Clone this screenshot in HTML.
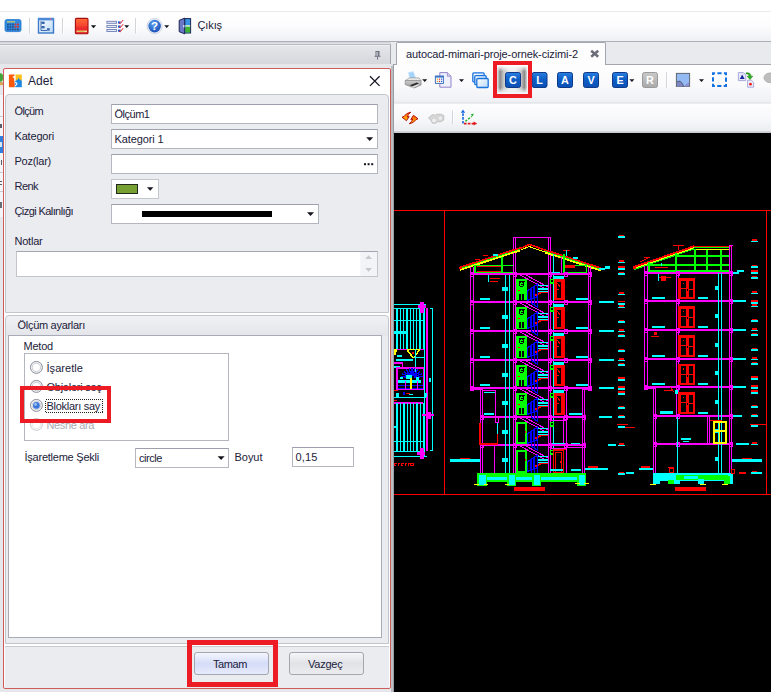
<!DOCTYPE html>
<html lang="tr">
<head>
<meta charset="utf-8">
<title>Adet</title>
<style>
html,body{margin:0;padding:0;}
body{width:771px;height:692px;overflow:hidden;background:#fff;position:relative;font-family:"Liberation Sans","DejaVu Sans",sans-serif;font-size:11px;color:#1b1b3a;}
.abs{position:absolute;}
.t{position:absolute;white-space:nowrap;line-height:13px;height:13px;}
#maintb{left:0;top:11px;width:771px;height:30px;background:linear-gradient(#ffffff 0%,#fdfdfe 45%,#eef0f4 100%);border-top:1px solid #e9eaee;box-sizing:border-box;}
#tbline1{left:0;top:41px;width:771px;height:1px;background:#adb0b8;}
#tbline2{left:0;top:42px;width:771px;height:1px;background:#d4d6dc;}
#workbg{left:0;top:43px;width:771px;height:649px;background:#dfe0e5;}
#lphead{left:0;top:44px;width:391px;height:21px;background:linear-gradient(#e6e7eb,#d6d7dc);border-top:1px solid #b9bbc3;border-right:1px solid #a3a5af;border-bottom:1px solid #c4c6cd;box-sizing:border-box;box-shadow:inset 0 1px 0 #eff0f3;}
#lpbody{left:0;top:64px;width:391px;height:628px;background:#e6e7eb;}
#dlg{left:3px;top:68px;width:388px;height:621px;box-sizing:border-box;border:1px solid #cd5c5a;border-radius:2px;background:#fff;}
#p1{left:5px;top:94px;width:384px;height:219px;box-sizing:border-box;border:1px solid #c3c5cc;border-radius:4px 4px 0 0;background:#ebecf0;}
#p2{left:5px;top:315px;width:384px;height:329px;box-sizing:border-box;border:1px solid #c3c5cc;border-radius:4px 4px 0 0;background:linear-gradient(#f0f1f4 0,#e4e5ea 20px,#ebecf0 20px);}
#p2w{left:8px;top:335px;width:374px;height:303px;box-sizing:border-box;border:1px solid #a9acb6;background:#fff;}
#p3{left:5px;top:646px;width:384px;height:42px;box-sizing:border-box;border-top:1px solid #c9cbd1;background:#ebecf0;}
.inp{position:absolute;box-sizing:border-box;border:1px solid #b4b6c0;border-top-color:#9ea1ad;background:#fff;}
.btn{position:absolute;box-sizing:border-box;border:1px solid #a3a5af;border-radius:3px;}
.red{position:absolute;box-sizing:border-box;border:5px solid #ed1c24;}
#tabstrip{left:391px;top:42px;width:380px;height:22px;background:#e9eaed;}
#tab{left:396px;top:42px;width:210px;height:23px;box-sizing:border-box;border:1px solid #a3a5af;border-bottom:none;background:#fdfdfe;border-radius:2px 2px 0 0;}
#rtb{left:394px;top:64px;width:377px;height:69px;box-sizing:border-box;border-top:1px solid #a3a5af;background:linear-gradient(#fefefe 0px,#fafafc 20px,#eff0f4 37px,#dadce2 38px,#fdfdfe 39px,#f7f8fa 54px,#ebedf1 66px,#b9bbc3 67px,#d9dade 68px);}
#cad{left:394px;top:133px;width:377px;height:559px;background:#000;}
svg{position:absolute;left:0;top:0;}
</style>
</head>
<body>
<div class="abs" id="maintb"></div>
<div class="abs" id="tbline1"></div>
<div class="abs" id="tbline2"></div>
<div class="abs" id="workbg"></div>
<div class="abs" id="lphead"></div>
<div class="abs" id="lpbody"></div>
<div class="abs" style="left:391px;top:66px;width:2px;height:626px;background:#bbbec1;"></div>
<div class="abs" style="left:393px;top:64px;width:1px;height:628px;background:#9a9ca6;"></div>
<div class="abs" id="tabstrip"></div>
<div class="abs" id="rtb"></div>
<div class="abs" id="tab"></div>
<div class="abs" id="cad"></div>

<div class="abs" style="left:0;top:95px;width:3px;height:122px;background:#f4f5f8;"></div>
<div class="abs" style="left:0;top:136px;width:3px;height:17px;background:#2f7fe0;"></div>
<div class="abs" style="left:0;top:116px;width:3px;height:1px;background:#c9cbd2;"></div>
<div class="abs" style="left:0;top:172px;width:3px;height:1px;background:#c9cbd2;"></div>
<div class="abs" style="left:0;top:191px;width:3px;height:1px;background:#c9cbd2;"></div>
<div class="abs" style="left:0;top:124px;width:2px;height:4px;background:#5a5d68;"></div>
<div class="abs" style="left:0;top:142px;width:2px;height:5px;background:#d6e6fb;"></div>
<div class="abs" style="left:1px;top:160px;width:1px;height:5px;background:#5a5d68;"></div>
<div class="abs" style="left:0;top:181px;width:2px;height:1px;background:#5a5d68;"></div>
<div class="abs" style="left:0;top:184px;width:2px;height:1px;background:#5a5d68;"></div>
<div class="abs" style="left:0;top:202px;width:2px;height:6px;background:#6a6d78;"></div>
<div class="abs" id="dlg"></div>
<div class="abs" id="p1"></div>
<div class="abs" id="p2"></div>
<div class="abs" id="p2w"></div>
<div class="abs" id="p3"></div>

<!-- form inputs -->
<div class="inp" style="left:111px;top:104px;width:267px;height:20px;"></div>
<div class="inp" style="left:111px;top:129px;width:267px;height:20px;"></div>
<div class="inp" style="left:111px;top:154px;width:267px;height:20px;"></div>
<div class="inp" style="left:111px;top:179px;width:48px;height:20px;border-color:#c4c6cd;"></div>
<div class="inp" style="left:111px;top:204px;width:208px;height:20px;"></div>
<div class="inp" style="left:16px;top:251px;width:362px;height:26px;border-color:#a3a6b1 #c3c5cc #c3c5cc #c3c5cc;"></div>
<div class="abs" style="left:116px;top:184px;width:22px;height:10px;box-sizing:border-box;border:1px solid #23281c;background:#77a033;"></div>
<div class="abs" style="left:142px;top:211px;width:130px;height:6px;background:#000;"></div>

<div class="inp" style="left:24px;top:353px;width:205px;height:88px;border-color:#b3b5bf;"></div>
<div class="inp" style="left:135px;top:448px;width:94px;height:20px;"></div>
<div class="inp" style="left:292px;top:447px;width:62px;height:20px;"></div>

<div class="btn" style="left:194px;top:652px;width:75px;height:23px;background:linear-gradient(#f4f6fe,#d5dcf8 50%,#e6eafc);"></div>
<div class="btn" style="left:289px;top:652px;width:75px;height:23px;background:linear-gradient(#f6f6f8,#e1e2e7 50%,#ececf0);"></div>

<div class="t" style="left:197.5px;top:19.39px;font-size:11px;line-height:13px;height:13px;letter-spacing:-0.113px;">Çıkış</div>
<div class="t" style="left:28px;top:74.04px;font-size:12px;line-height:14px;height:14px;letter-spacing:0.078px;">Adet</div>
<div class="t" style="left:14.5px;top:104.89px;font-size:11px;line-height:13px;height:13px;letter-spacing:-0.656px;">Ölçüm</div>
<div class="t" style="left:14.5px;top:129.89px;font-size:11px;line-height:13px;height:13px;letter-spacing:-0.186px;">Kategori</div>
<div class="t" style="left:14.5px;top:154.89px;font-size:11px;line-height:13px;height:13px;letter-spacing:-0.252px;">Poz(lar)</div>
<div class="t" style="left:14.5px;top:179.89px;font-size:11px;line-height:13px;height:13px;letter-spacing:-0.547px;">Renk</div>
<div class="t" style="left:14.5px;top:204.89px;font-size:11px;line-height:13px;height:13px;letter-spacing:-0.584px;">Çizgi Kalınlığı</div>
<div class="t" style="left:14.5px;top:234.89px;font-size:11px;line-height:13px;height:13px;letter-spacing:-0.224px;">Notlar</div>
<div class="t" style="left:114.5px;top:107.89px;font-size:11px;line-height:13px;height:13px;letter-spacing:-0.484px;">Ölçüm1</div>
<div class="t" style="left:114.5px;top:132.89px;font-size:11px;line-height:13px;height:13px;letter-spacing:-0.116px;">Kategori 1</div>
<div class="t" style="left:17.5px;top:318.89px;font-size:11px;line-height:13px;height:13px;letter-spacing:-0.288px;">Ölçüm ayarları</div>
<div class="t" style="left:23.5px;top:339.89px;font-size:11px;line-height:13px;height:13px;letter-spacing:-0.216px;">Metod</div>
<div class="t" style="left:46.5px;top:361.89px;font-size:11px;line-height:13px;height:13px;letter-spacing:0.053px;">İşaretle</div>
<div class="t" style="left:46.5px;top:380.89px;font-size:11px;line-height:13px;height:13px;letter-spacing:-0.257px;">Objeleri seç</div>
<div class="t" style="left:46.5px;top:399.89px;font-size:11px;line-height:13px;height:13px;letter-spacing:-0.280px;">Blokları say</div>
<div class="t" style="left:46.5px;top:418.89px;font-size:11px;line-height:13px;height:13px;color:#a9abb3;letter-spacing:-0.363px;">Nesne ara</div>
<div class="t" style="left:24.5px;top:450.89px;font-size:11px;line-height:13px;height:13px;letter-spacing:-0.235px;">İşaretleme Şekli</div>
<div class="t" style="left:139px;top:451.89px;font-size:11px;line-height:13px;height:13px;letter-spacing:-0.445px;">circle</div>
<div class="t" style="left:234.5px;top:450.89px;font-size:11px;line-height:13px;height:13px;letter-spacing:-0.028px;">Boyut</div>
<div class="t" style="left:295.5px;top:450.89px;font-size:11px;line-height:13px;height:13px;letter-spacing:0.145px;">0,15</div>
<div class="t" style="left:213px;top:657.89px;font-size:11px;line-height:13px;height:13px;letter-spacing:-0.412px;">Tamam</div>
<div class="t" style="left:308px;top:657.89px;font-size:11px;line-height:13px;height:13px;letter-spacing:-0.229px;">Vazgeç</div>
<div class="t" style="left:406px;top:48.19px;font-size:11px;line-height:13px;height:13px;letter-spacing:-0.116px;">autocad-mimari-proje-ornek-cizimi-2</div>
<svg width="771" height="692" viewBox="0 0 771 692">
<defs><linearGradient id="gBlueBtn" x1="0" y1="0" x2="0" y2="1"><stop offset="0" stop-color="#2b7fe0"/><stop offset="0.45" stop-color="#0f5fc6"/><stop offset="1" stop-color="#0b50b4"/></linearGradient><linearGradient id="gGrayBtn" x1="0" y1="0" x2="0" y2="1"><stop offset="0" stop-color="#c9c9c9"/><stop offset="1" stop-color="#a9a9a9"/></linearGradient><linearGradient id="gBook" x1="0" y1="0" x2="0" y2="1"><stop offset="0" stop-color="#ff6a35"/><stop offset="0.5" stop-color="#f5452f"/><stop offset="0.55" stop-color="#ee302c"/><stop offset="1" stop-color="#e32424"/></linearGradient><linearGradient id="gWin" x1="0" y1="0" x2="1" y2="1"><stop offset="0" stop-color="#ffffff"/><stop offset="1" stop-color="#b9d9f7"/></linearGradient><radialGradient id="gHelp" cx="0.4" cy="0.3" r="0.8"><stop offset="0" stop-color="#5aa0f0"/><stop offset="1" stop-color="#1548b0"/></radialGradient><linearGradient id="gHot" x1="0" y1="0" x2="1" y2="0"><stop offset="0" stop-color="#e9e9eb"/><stop offset="0.1" stop-color="#8a8a8a"/><stop offset="0.22" stop-color="#c9c9c9"/><stop offset="0.4" stop-color="#ececec"/><stop offset="0.6" stop-color="#ececec"/><stop offset="0.78" stop-color="#c9c9c9"/><stop offset="0.9" stop-color="#8a8a8a"/><stop offset="1" stop-color="#e9e9eb"/></linearGradient><linearGradient id="gHotV" x1="0" y1="0" x2="0" y2="1"><stop offset="0" stop-color="#fbfbfd" stop-opacity="1"/><stop offset="0.2" stop-color="#fbfbfd" stop-opacity="0"/><stop offset="0.8" stop-color="#f1f2f5" stop-opacity="0"/><stop offset="1" stop-color="#f1f2f5" stop-opacity="1"/></linearGradient><linearGradient id="gPrn" x1="0" y1="0" x2="0" y2="1"><stop offset="0" stop-color="#d2d2d2"/><stop offset="1" stop-color="#8e8e8e"/></linearGradient><linearGradient id="gRefresh" x1="0" y1="0" x2="0" y2="1"><stop offset="0" stop-color="#ff5a00"/><stop offset="1" stop-color="#ffc400"/></linearGradient></defs>
<rect x="5" y="19.6" width="16" height="12" rx="1.8" fill="#2f8fe6" stroke="#2272c8" stroke-width="0.8"/>
<rect x="7" y="21.2" width="8" height="1.3" fill="#c9c46a"/><rect x="16.5" y="21.2" width="2.5" height="1.3" fill="#4a7ac0"/>
<rect x="7.0" y="23.6" width="1.8" height="1.7" fill="#234f8f"/>
<rect x="9.5" y="23.6" width="1.8" height="1.7" fill="#234f8f"/>
<rect x="12.0" y="23.6" width="1.8" height="1.7" fill="#234f8f"/>
<rect x="14.5" y="23.6" width="1.8" height="1.7" fill="#d8342c"/>
<rect x="17.0" y="23.6" width="1.8" height="1.7" fill="#d8342c"/>
<rect x="7.0" y="26.1" width="1.8" height="1.7" fill="#234f8f"/>
<rect x="9.5" y="26.1" width="1.8" height="1.7" fill="#234f8f"/>
<rect x="12.0" y="26.1" width="1.8" height="1.7" fill="#234f8f"/>
<rect x="14.5" y="26.1" width="1.8" height="1.7" fill="#d8342c"/>
<rect x="17.0" y="26.1" width="1.8" height="1.7" fill="#d8342c"/>
<rect x="7.0" y="28.6" width="1.8" height="1.7" fill="#234f8f"/>
<rect x="9.5" y="28.6" width="1.8" height="1.7" fill="#234f8f"/>
<rect x="12.0" y="28.6" width="1.8" height="1.7" fill="#234f8f"/>
<rect x="14.5" y="28.6" width="1.8" height="1.7" fill="#3a4a70"/>
<rect x="17.0" y="28.6" width="1.8" height="1.7" fill="#3a4a70"/>
<rect x="29.0" y="18" width="1" height="15.5" fill="#d3d5db"/><rect x="30.0" y="18" width="1" height="15.5" fill="#ffffff" opacity="0.8"/>
<rect x="38.5" y="18.5" width="15" height="14.5" fill="url(#gWin)" stroke="#3b79c9" stroke-width="1.4"/>
<rect x="38" y="18" width="16" height="2.4" fill="#4a8ad8"/><rect x="50" y="18.6" width="1.4" height="1.2" fill="#ff5a8a"/>
<rect x="42" y="21.6" width="2.6" height="2.4" fill="#3767ae"/><rect x="42" y="26" width="2.6" height="2.4" fill="#3767ae"/><rect x="47" y="28.2" width="2.8" height="2.4" fill="#3767ae"/>
<path d="M41 21v9.5h6M41 27.2h1.5M41 22.8h1.5" fill="none" stroke="#2b5aa0" stroke-width="0.9"/>
<rect x="62.0" y="18" width="1" height="15.5" fill="#d3d5db"/><rect x="63.0" y="18" width="1" height="15.5" fill="#ffffff" opacity="0.8"/>
<rect x="75.4" y="18.4" width="12.6" height="15.4" rx="1" fill="url(#gBook)" stroke="#a80f12" stroke-width="1.1"/>
<rect x="76.6" y="30.6" width="10.4" height="1.5" fill="#f4e3a0"/><rect x="77.5" y="31" width="7" height="0.8" fill="#c9c03a"/>
<path d="M90.8 25.2h5.4l-2.7 3z" fill="#15151f"/>
<rect x="106.9" y="21.3" width="9.6" height="2" fill="#e9edf7" stroke="#6d7fb5" stroke-width="0.9"/>
<rect x="118" y="21.4" width="2.6" height="2.2" fill="#1f5fd6"/>
<path d="M119 22.8l1.2 0.8l3-3.6" fill="none" stroke="#e8202a" stroke-width="1"/>
<rect x="106.9" y="25.400000000000002" width="9.6" height="2" fill="#e9edf7" stroke="#6d7fb5" stroke-width="0.9"/>
<rect x="118" y="25.5" width="2.6" height="2.2" fill="#1f5fd6"/>
<path d="M119 26.900000000000002l1.2 0.8l3-3.6" fill="none" stroke="#e8202a" stroke-width="1"/>
<rect x="106.9" y="29.5" width="9.6" height="2" fill="#e9edf7" stroke="#6d7fb5" stroke-width="0.9"/>
<rect x="118" y="29.599999999999998" width="2.6" height="2.2" fill="#1f5fd6"/>
<path d="M119 31.0l1.2 0.8l3-3.6" fill="none" stroke="#e8202a" stroke-width="1"/>
<path d="M124.2 25.2h5l-2.5 2.8z" fill="#15151f"/>
<rect x="135.0" y="18" width="1" height="15.5" fill="#d3d5db"/><rect x="136.0" y="18" width="1" height="15.5" fill="#ffffff" opacity="0.8"/>
<circle cx="154.6" cy="26.1" r="7.6" fill="#eef1f8" stroke="#c5cbe0" stroke-width="0.8"/>
<circle cx="154.6" cy="26.1" r="6.3" fill="url(#gHelp)"/>
<text x="154.6" y="30.2" text-anchor="middle" font-family="Liberation Sans, sans-serif" font-weight="bold" font-size="11.5" fill="#ffffff">?</text>
<path d="M164.2 25.2h5l-2.5 2.8z" fill="#15151f"/>
<path d="M179.2 20.3l5.6-2.2v15.8l-5.6-2.2z" fill="#6a78c6" stroke="#1c2452" stroke-width="1"/>
<rect x="184.8" y="18.6" width="5.8" height="14.4" fill="#3a94e6" stroke="#1c2452" stroke-width="1"/>
<rect x="185.4" y="26.5" width="4.7" height="6" fill="#3fb330"/><rect x="185.4" y="25" width="4.7" height="1.8" fill="#b9e6c0"/>
<rect x="183.2" y="25" width="1.2" height="2.4" fill="#e8ecff"/>
<path d="M375.5 51.5h4M376 51.5v4.5M379 51.5v4.5M374.5 56.3h6M377.5 56.5v3" fill="none" stroke="#6e7280" stroke-width="1"/><rect x="377.6" y="52" width="1.3" height="4" fill="#6e7280"/>
<rect x="8.900" y="74.500" width="5.900" height="12.700" rx="0.8" fill="#ff5a0a"/>
<rect x="15.400" y="74.500" width="6.400" height="6.200" fill="#ffc21a"/>
<rect x="14.800" y="80.600" width="7" height="6.600" fill="#1e86e0"/>
<path d="M12.800 77.600l2-1.500v5.400" fill="none" stroke="#ffffff" stroke-width="1.200"/>
<path d="M18.700 77.600l0.900 2.100h2.200l-1.700 1.500l0.600 2.300l-2-1.200l-2 1.200l0.600-2.300l-1.700-1.500h2.200z" fill="#1e86e0"/>
<path d="M14.600 83c1.300-0.900 2.500-0.300 2.300 0.800c-0.200 1.100-1.500 1.300-1.700 2.500" fill="none" stroke="#ffffff" stroke-width="1.100"/>
<path d="M370 76.3l9.6 9.6M379.6 76.3l-9.6 9.6" fill="none" stroke="#15151f" stroke-width="1.25"/>
<ellipse cx="0.5" cy="77.5" rx="2.6" ry="4.2" fill="#3fa53a"/><rect x="0" y="82" width="3" height="3.2" fill="#d9a55a"/>
<path d="M366.2 137.3h7l-3.5 3.6z" fill="#15151f"/>
<rect x="364" y="163.2" width="2" height="2" fill="#15151f"/>
<rect x="367.6" y="163.2" width="2" height="2" fill="#15151f"/>
<rect x="371.2" y="163.2" width="2" height="2" fill="#15151f"/>
<path d="M147 187.3h6.4l-3.2 3.4z" fill="#15151f"/>
<path d="M307 212.3h7l-3.5 3.6z" fill="#15151f"/>
<path d="M217.6 456.3h7l-3.5 3.6z" fill="#15151f"/>
<rect x="360.3" y="252" width="16.700" height="24" fill="#f3f4f8"/><path d="M365.200 259l3.400-3.800l3.400 3.800z" fill="#c6c8cf"/><path d="M365.200 268.100l3.400 3.700l3.400-3.700z" fill="#c6c8cf"/>
<g><circle cx="36.4" cy="367.4" r="6" fill="#f2f3f6" stroke="#8e919c" stroke-width="1"/><circle cx="36.4" cy="367.4" r="4.2" fill="#ffffff" stroke="#c4c6ce" stroke-width="0.9"/>
</g>
<g><circle cx="36.4" cy="386.4" r="6" fill="#f2f3f6" stroke="#8e919c" stroke-width="1"/><circle cx="36.4" cy="386.4" r="4.2" fill="#ffffff" stroke="#c4c6ce" stroke-width="0.9"/>
</g>
<g><circle cx="36.4" cy="405.4" r="6" fill="#f2f3f6" stroke="#8e919c" stroke-width="1"/><circle cx="36.4" cy="405.4" r="4.2" fill="#ffffff" stroke="#c4c6ce" stroke-width="0.9"/>
<circle cx="36.4" cy="405.4" r="3.4" fill="#3d78d8"/><circle cx="35.6" cy="404.4" r="1.4" fill="#9cc2f4"/>
</g>
<g opacity="0.45"><circle cx="36.4" cy="424.4" r="6" fill="#f2f3f6" stroke="#8e919c" stroke-width="1"/><circle cx="36.4" cy="424.4" r="4.2" fill="#ffffff" stroke="#c4c6ce" stroke-width="0.9"/>
</g>
<rect x="45.5" y="399.5" width="57" height="13" fill="none" stroke="#222" stroke-width="1" stroke-dasharray="1 1" shape-rendering="crispEdges"/>
<path d="M408.200 72.400l5.200-0.900l2.600 7l-6 1.200z" fill="#a4d3fb" stroke="#d9ecfd" stroke-width="0.7"/>
<path d="M405.200 80.600l4.300-2.900l9.600 0.200l2 2.700z" fill="#e6e6e6" stroke="#8a8a8a" stroke-width="0.6"/>
<path d="M405.200 80.600h15.900v4.300l-6.800 3.100l-9.100-3.400z" fill="url(#gPrn)" stroke="#7a7a7a" stroke-width="0.6"/>
<path d="M409.800 85.200l7-2.700l2.200 0.900l-6.600 2.900z" fill="#2c2c2c"/>
<path d="M411.800 87l6.200-2.600l1 0.500l-5.800 2.900z" fill="#f4f4f4"/>
<path d="M422.2 79.2h5l-2.5 2.8z" fill="#15151f"/>
<path d="M439.8 72.6h7.6l3.6 3.6v11h-11.2z" fill="#eef0fb" stroke="#9384cc" stroke-width="1"/><path d="M447.4 72.6v3.6h3.6" fill="#d5d3ee" stroke="#9384cc" stroke-width="0.8"/>
<rect x="435.4" y="76" width="8" height="7.4" fill="#f7f9ff" stroke="#3f74c4" stroke-width="1"/><rect x="435.4" y="76" width="8" height="1.6" fill="#3f74c4"/>
<rect x="436.8" y="78.6" width="1.2" height="1.2" fill="#e8a020"/><rect x="436.8" y="80.8" width="1.2" height="1.2" fill="#e8a020"/>
<rect x="438.90000000000003" y="78.6" width="1.2" height="1.2" fill="#d83030"/><rect x="438.90000000000003" y="80.8" width="1.2" height="1.2" fill="#d83030"/>
<rect x="441.0" y="78.6" width="1.2" height="1.2" fill="#3060c8"/><rect x="441.0" y="80.8" width="1.2" height="1.2" fill="#3060c8"/>
<path d="M459 79.2h5l-2.5 2.8z" fill="#15151f"/>
<rect x="472.8" y="72.9" width="11.4" height="9" rx="1" fill="url(#gWin)" stroke="#1a72dc" stroke-width="1.3"/>
<rect x="474.8" y="75.7" width="11.4" height="9" rx="1" fill="url(#gWin)" stroke="#1a72dc" stroke-width="1.3"/>
<rect x="476.8" y="78.5" width="11.4" height="9" rx="1" fill="url(#gWin)" stroke="#1a72dc" stroke-width="1.3"/>
<rect x="497" y="66" width="30.5" height="27" fill="url(#gHot)"/><rect x="497" y="66" width="30.5" height="27" fill="url(#gHotV)"/>
<rect x="505.5" y="72.5" width="15" height="15" rx="2" fill="url(#gBlueBtn)" stroke="#0f3a8a" stroke-width="1"/>
<text x="513" y="84" text-anchor="middle" font-family="Liberation Sans, sans-serif" font-weight="bold" font-size="10.8" fill="#ffffff">C</text>
<rect x="532.0" y="72.5" width="15" height="15" rx="2" fill="url(#gBlueBtn)" stroke="#0f3a8a" stroke-width="1"/>
<text x="539.5" y="84" text-anchor="middle" font-family="Liberation Sans, sans-serif" font-weight="bold" font-size="10.8" fill="#ffffff">L</text>
<rect x="557.5" y="72.5" width="15" height="15" rx="2" fill="url(#gBlueBtn)" stroke="#0f3a8a" stroke-width="1"/>
<text x="565" y="84" text-anchor="middle" font-family="Liberation Sans, sans-serif" font-weight="bold" font-size="10.8" fill="#ffffff">A</text>
<rect x="583.5" y="72.5" width="15" height="15" rx="2" fill="url(#gBlueBtn)" stroke="#0f3a8a" stroke-width="1"/>
<text x="591" y="84" text-anchor="middle" font-family="Liberation Sans, sans-serif" font-weight="bold" font-size="10.8" fill="#ffffff">V</text>
<rect x="612.5" y="72.5" width="15" height="15" rx="2" fill="url(#gBlueBtn)" stroke="#0f3a8a" stroke-width="1"/>
<text x="620" y="84" text-anchor="middle" font-family="Liberation Sans, sans-serif" font-weight="bold" font-size="10.8" fill="#ffffff">E</text>
<rect x="642.5" y="72.5" width="15" height="15" rx="2" fill="url(#gGrayBtn)" stroke="#9a9a9a" stroke-width="1"/>
<text x="650" y="84" text-anchor="middle" font-family="Liberation Sans, sans-serif" font-weight="bold" font-size="10.8" fill="#ffffff">R</text>
<path d="M629.4 79.2h5l-2.5 2.8z" fill="#15151f"/>
<rect x="666.0" y="72" width="1" height="16" fill="#d3d5db"/><rect x="667.0" y="72" width="1" height="16" fill="#ffffff" opacity="0.8"/>
<rect x="676.4" y="73.4" width="13.2" height="13" fill="#93baf2" stroke="#5f6670" stroke-width="1"/>
<path d="M677 82c3-2 5 0 6.5 4.4h-6.500z" fill="#7f86c4"/><path d="M683.500 86.400l5.600-4.400v4.400z" fill="#8d8fd0"/><path d="M677 82c3-2 5 0 6.500 4.400" fill="none" stroke="#3c4660" stroke-width="0.8"/>
<path d="M699 79.2h5l-2.5 2.8z" fill="#15151f"/>
<rect x="713" y="73.2" width="13" height="12.8" fill="none" stroke="#1272e2" stroke-width="2" stroke-dasharray="4.2 2.3" stroke-dashoffset="2.1"/>
<path d="M738.400 72.600h5l2.400 2.400v5.600h-7.400z" fill="#e6e8fa" stroke="#a3a2da" stroke-width="0.9"/><path d="M739.800 79l2.400-4.400l2.400 4.400z" fill="#15289a"/>
<path d="M747.600 80.200h3.800l2.200 2.200v4.800h-6z" fill="#eceefb" stroke="#a3a2da" stroke-width="0.9"/><circle cx="750.500" cy="84.200" r="1.400" fill="#f02020"/>
<path d="M746 72.800c3.500-0.500 5 1 5 3.400h1.800l-2.800 3.400l-2.800-3.400h1.800c0-1.400-1-2.400-3-2.400z" fill="#2fae25" stroke="#1c7a18" stroke-width="0.5"/>
<ellipse cx="770" cy="77.800" rx="6" ry="4.800" fill="#bdbdbd" stroke="#a8a8a8" stroke-width="0.8"/>
<path d="M410.800 112.200Q406 113 404 116.400L402 117.200L406.500 120.700L409.200 116.500L407.300 117Q407.600 114.500 410.800 112.200z" fill="url(#gRefresh)" stroke="#b81010" stroke-width="1" stroke-linejoin="round"/>
<path d="M409.200 123.800Q414 123 416 119.600L418 118.800L413.500 115.300L410.800 119.500L412.700 119Q412.400 121.500 409.200 123.800z" fill="url(#gRefresh)" stroke="#b81010" stroke-width="1" stroke-linejoin="round"/>
<path d="M428.400 118l4-3.400l3 0.600l1.200-1h4.600l2.600 1.400v4.400l-3 1.800h-3.400l-1.600 1.400h-3.400l-1.400-2.800z" fill="#d6d6d6" stroke="#b4b4b4" stroke-width="0.7"/><circle cx="434" cy="120.600" r="1.800" fill="#f1f1f1"/><circle cx="440.400" cy="118.200" r="1.600" fill="#eeeeee"/>
<rect x="452.0" y="110.5" width="1" height="14.0" fill="#d3d5db"/><rect x="453.0" y="110.5" width="1" height="14.0" fill="#ffffff" opacity="0.8"/>
<path d="M463 123.500v-11" stroke="#1565e0" stroke-width="1.600" stroke-dasharray="2.600 1.200" fill="none"/><path d="M460.800 112.800l2.200-3.200l2.200 3.200z" fill="#1565e0"/>
<path d="M464 123.600h10" stroke="#e01818" stroke-width="1.600" stroke-dasharray="2.600 1.200" fill="none"/><path d="M473.600 121.600l3.600 2l-3.600 2z" fill="#e01818"/>
<path d="M465.400 121.400l6.200-5" stroke="#1fb02a" stroke-width="1.400" stroke-dasharray="2.200 1.400" fill="none"/><path d="M470.600 114.400l3.200-0.800l-1.200 3z" fill="#1fb02a"/>
<path d="M591.200 50.800l7 6M598.200 50.800l-7 6" stroke="#6a6d78" stroke-width="2.5" fill="none"/>
</svg>
<svg width="771" height="692" viewBox="0 0 771 692" shape-rendering="crispEdges">
<rect x="394" y="210" width="377" height="1" fill="#ff0000"/>
<rect x="394" y="494" width="377" height="1" fill="#ff0000"/>
<rect x="444" y="210" width="1" height="285" fill="#ff0000"/>
<rect x="766" y="210" width="1" height="285" fill="#ff0000"/>
<rect x="513" y="237" width="38" height="1" fill="#ff00ff"/>
<rect x="513" y="237" width="1" height="236" fill="#ff00ff"/>
<rect x="515" y="237" width="1" height="236" fill="#ff00ff"/>
<rect x="548" y="237" width="1" height="236" fill="#ff00ff"/>
<rect x="550" y="237" width="1" height="236" fill="#ff00ff"/>
<line x1="460" y1="267.5" x2="520" y2="248" stroke="#ff0000" stroke-width="1.8"/>
<line x1="601" y1="268.2" x2="545" y2="250" stroke="#ff0000" stroke-width="1.8"/>
<line x1="460" y1="268.9" x2="520" y2="249.4" stroke="#00ff00" stroke-width="1.2"/>
<line x1="601" y1="269.59999999999997" x2="545" y2="251.4" stroke="#00ff00" stroke-width="1.2"/>
<line x1="460" y1="270.0" x2="520" y2="250.5" stroke="#ffff00" stroke-width="1.7"/>
<line x1="601" y1="270.7" x2="545" y2="252.5" stroke="#ffff00" stroke-width="1.7"/>
<line x1="520" y1="248.5" x2="529.5" y2="244.5" stroke="#ff0000" stroke-width="1.6"/>
<line x1="529.5" y1="244.5" x2="545" y2="250" stroke="#ff0000" stroke-width="1.6"/>
<line x1="521" y1="250" x2="529" y2="246.5" stroke="#ffff00" stroke-width="1"/>
<line x1="529" y1="246.5" x2="545" y2="252" stroke="#ffff00" stroke-width="1"/>
<rect x="459" y="266.5" width="3" height="2.5" fill="#ff0000"/>
<rect x="598.5" y="267.5" width="3" height="2.5" fill="#ff0000"/>
<rect x="483" y="255" width="5" height="1" fill="#ff0000"/>
<rect x="475" y="259" width="5" height="1" fill="#ff0000"/>
<rect x="493" y="254" width="5" height="2" fill="#00ffff"/>
<rect x="563" y="250" width="7" height="1" fill="#ff0000"/>
<rect x="566" y="250" width="1" height="6" fill="#00ffff"/>
<rect x="573" y="257" width="5" height="2" fill="#00ffff"/>
<rect x="599" y="267.5" width="6" height="2" fill="#00ffff"/>
<rect x="605" y="265.5" width="5" height="3" fill="#00ffff"/>
<rect x="474" y="264.5" width="39" height="1.5" fill="#00ff00"/>
<rect x="474" y="271.5" width="39" height="1.5" fill="#00ff00"/>
<rect x="474" y="264.5" width="1.5" height="8.5" fill="#00ff00"/>
<rect x="501" y="257" width="2" height="16" fill="#00ff00"/>
<rect x="477" y="266" width="24" height="1" fill="#ff0000"/>
<rect x="477" y="271" width="24" height="1" fill="#ff0000"/>
<rect x="563" y="264.5" width="24" height="1.5" fill="#00ff00"/>
<rect x="563" y="271.5" width="24" height="1.5" fill="#00ff00"/>
<rect x="585.5" y="264.5" width="1.5" height="8.5" fill="#00ff00"/>
<rect x="565" y="265" width="10" height="2.5" fill="#ff0000"/>
<rect x="561" y="257" width="1" height="16" fill="#ff00ff"/>
<rect x="563" y="254" width="2" height="19" fill="#00ff00"/>
<rect x="553" y="254" width="1" height="219" fill="#00ffff"/>
<rect x="550" y="272" width="10" height="1" fill="#00ffff"/>
<rect x="470" y="267" width="1" height="122" fill="#ff00ff"/>
<rect x="473" y="267" width="1" height="122" fill="#ff00ff"/>
<rect x="588" y="267" width="1" height="122" fill="#ff00ff"/>
<rect x="590" y="267" width="1" height="122" fill="#ff00ff"/>
<rect x="480" y="387" width="1" height="86" fill="#ff00ff"/>
<rect x="482" y="389" width="1" height="84" fill="#ff00ff"/>
<rect x="582" y="389" width="1" height="84" fill="#ff00ff"/>
<rect x="584" y="387" width="1" height="86" fill="#ff00ff"/>
<rect x="470" y="273" width="121" height="2" fill="#ff00ff"/>
<rect x="470" y="272" width="4" height="1" fill="#ff00ff"/>
<rect x="470" y="276" width="4" height="1" fill="#ff00ff"/>
<rect x="470" y="272" width="1" height="5" fill="#ff00ff"/>
<rect x="473" y="272" width="1" height="5" fill="#ff00ff"/>
<rect x="513" y="272" width="4" height="1" fill="#ff00ff"/>
<rect x="513" y="276" width="4" height="1" fill="#ff00ff"/>
<rect x="513" y="272" width="1" height="5" fill="#ff00ff"/>
<rect x="516" y="272" width="1" height="5" fill="#ff00ff"/>
<rect x="548" y="272" width="4" height="1" fill="#ff00ff"/>
<rect x="548" y="276" width="4" height="1" fill="#ff00ff"/>
<rect x="548" y="272" width="1" height="5" fill="#ff00ff"/>
<rect x="551" y="272" width="1" height="5" fill="#ff00ff"/>
<rect x="564" y="272" width="4" height="1" fill="#ff00ff"/>
<rect x="564" y="276" width="4" height="1" fill="#ff00ff"/>
<rect x="564" y="272" width="1" height="5" fill="#ff00ff"/>
<rect x="567" y="272" width="1" height="5" fill="#ff00ff"/>
<rect x="588" y="272" width="4" height="1" fill="#ff00ff"/>
<rect x="588" y="276" width="4" height="1" fill="#ff00ff"/>
<rect x="588" y="272" width="1" height="5" fill="#ff00ff"/>
<rect x="591" y="272" width="1" height="5" fill="#ff00ff"/>
<rect x="470" y="301" width="121" height="2" fill="#ff00ff"/>
<rect x="470" y="300" width="4" height="1" fill="#ff00ff"/>
<rect x="470" y="304" width="4" height="1" fill="#ff00ff"/>
<rect x="470" y="300" width="1" height="5" fill="#ff00ff"/>
<rect x="473" y="300" width="1" height="5" fill="#ff00ff"/>
<rect x="513" y="300" width="4" height="1" fill="#ff00ff"/>
<rect x="513" y="304" width="4" height="1" fill="#ff00ff"/>
<rect x="513" y="300" width="1" height="5" fill="#ff00ff"/>
<rect x="516" y="300" width="1" height="5" fill="#ff00ff"/>
<rect x="548" y="300" width="4" height="1" fill="#ff00ff"/>
<rect x="548" y="304" width="4" height="1" fill="#ff00ff"/>
<rect x="548" y="300" width="1" height="5" fill="#ff00ff"/>
<rect x="551" y="300" width="1" height="5" fill="#ff00ff"/>
<rect x="564" y="300" width="4" height="1" fill="#ff00ff"/>
<rect x="564" y="304" width="4" height="1" fill="#ff00ff"/>
<rect x="564" y="300" width="1" height="5" fill="#ff00ff"/>
<rect x="567" y="300" width="1" height="5" fill="#ff00ff"/>
<rect x="588" y="300" width="4" height="1" fill="#ff00ff"/>
<rect x="588" y="304" width="4" height="1" fill="#ff00ff"/>
<rect x="588" y="300" width="1" height="5" fill="#ff00ff"/>
<rect x="591" y="300" width="1" height="5" fill="#ff00ff"/>
<rect x="470" y="330" width="121" height="2" fill="#ff00ff"/>
<rect x="470" y="329" width="4" height="1" fill="#ff00ff"/>
<rect x="470" y="333" width="4" height="1" fill="#ff00ff"/>
<rect x="470" y="329" width="1" height="5" fill="#ff00ff"/>
<rect x="473" y="329" width="1" height="5" fill="#ff00ff"/>
<rect x="513" y="329" width="4" height="1" fill="#ff00ff"/>
<rect x="513" y="333" width="4" height="1" fill="#ff00ff"/>
<rect x="513" y="329" width="1" height="5" fill="#ff00ff"/>
<rect x="516" y="329" width="1" height="5" fill="#ff00ff"/>
<rect x="548" y="329" width="4" height="1" fill="#ff00ff"/>
<rect x="548" y="333" width="4" height="1" fill="#ff00ff"/>
<rect x="548" y="329" width="1" height="5" fill="#ff00ff"/>
<rect x="551" y="329" width="1" height="5" fill="#ff00ff"/>
<rect x="564" y="329" width="4" height="1" fill="#ff00ff"/>
<rect x="564" y="333" width="4" height="1" fill="#ff00ff"/>
<rect x="564" y="329" width="1" height="5" fill="#ff00ff"/>
<rect x="567" y="329" width="1" height="5" fill="#ff00ff"/>
<rect x="588" y="329" width="4" height="1" fill="#ff00ff"/>
<rect x="588" y="333" width="4" height="1" fill="#ff00ff"/>
<rect x="588" y="329" width="1" height="5" fill="#ff00ff"/>
<rect x="591" y="329" width="1" height="5" fill="#ff00ff"/>
<rect x="470" y="359" width="121" height="2" fill="#ff00ff"/>
<rect x="470" y="358" width="4" height="1" fill="#ff00ff"/>
<rect x="470" y="362" width="4" height="1" fill="#ff00ff"/>
<rect x="470" y="358" width="1" height="5" fill="#ff00ff"/>
<rect x="473" y="358" width="1" height="5" fill="#ff00ff"/>
<rect x="513" y="358" width="4" height="1" fill="#ff00ff"/>
<rect x="513" y="362" width="4" height="1" fill="#ff00ff"/>
<rect x="513" y="358" width="1" height="5" fill="#ff00ff"/>
<rect x="516" y="358" width="1" height="5" fill="#ff00ff"/>
<rect x="548" y="358" width="4" height="1" fill="#ff00ff"/>
<rect x="548" y="362" width="4" height="1" fill="#ff00ff"/>
<rect x="548" y="358" width="1" height="5" fill="#ff00ff"/>
<rect x="551" y="358" width="1" height="5" fill="#ff00ff"/>
<rect x="564" y="358" width="4" height="1" fill="#ff00ff"/>
<rect x="564" y="362" width="4" height="1" fill="#ff00ff"/>
<rect x="564" y="358" width="1" height="5" fill="#ff00ff"/>
<rect x="567" y="358" width="1" height="5" fill="#ff00ff"/>
<rect x="588" y="358" width="4" height="1" fill="#ff00ff"/>
<rect x="588" y="362" width="4" height="1" fill="#ff00ff"/>
<rect x="588" y="358" width="1" height="5" fill="#ff00ff"/>
<rect x="591" y="358" width="1" height="5" fill="#ff00ff"/>
<rect x="470" y="387" width="121" height="2" fill="#ff00ff"/>
<rect x="470" y="386" width="4" height="1" fill="#ff00ff"/>
<rect x="470" y="390" width="4" height="1" fill="#ff00ff"/>
<rect x="470" y="386" width="1" height="5" fill="#ff00ff"/>
<rect x="473" y="386" width="1" height="5" fill="#ff00ff"/>
<rect x="513" y="386" width="4" height="1" fill="#ff00ff"/>
<rect x="513" y="390" width="4" height="1" fill="#ff00ff"/>
<rect x="513" y="386" width="1" height="5" fill="#ff00ff"/>
<rect x="516" y="386" width="1" height="5" fill="#ff00ff"/>
<rect x="548" y="386" width="4" height="1" fill="#ff00ff"/>
<rect x="548" y="390" width="4" height="1" fill="#ff00ff"/>
<rect x="548" y="386" width="1" height="5" fill="#ff00ff"/>
<rect x="551" y="386" width="1" height="5" fill="#ff00ff"/>
<rect x="564" y="386" width="4" height="1" fill="#ff00ff"/>
<rect x="564" y="390" width="4" height="1" fill="#ff00ff"/>
<rect x="564" y="386" width="1" height="5" fill="#ff00ff"/>
<rect x="567" y="386" width="1" height="5" fill="#ff00ff"/>
<rect x="588" y="386" width="4" height="1" fill="#ff00ff"/>
<rect x="588" y="390" width="4" height="1" fill="#ff00ff"/>
<rect x="588" y="386" width="1" height="5" fill="#ff00ff"/>
<rect x="591" y="386" width="1" height="5" fill="#ff00ff"/>
<rect x="480" y="416" width="105" height="2" fill="#ff00ff"/>
<rect x="480" y="415" width="4" height="1" fill="#ff00ff"/>
<rect x="480" y="419" width="4" height="1" fill="#ff00ff"/>
<rect x="480" y="415" width="1" height="5" fill="#ff00ff"/>
<rect x="483" y="415" width="1" height="5" fill="#ff00ff"/>
<rect x="513" y="415" width="4" height="1" fill="#ff00ff"/>
<rect x="513" y="419" width="4" height="1" fill="#ff00ff"/>
<rect x="513" y="415" width="1" height="5" fill="#ff00ff"/>
<rect x="516" y="415" width="1" height="5" fill="#ff00ff"/>
<rect x="548" y="415" width="4" height="1" fill="#ff00ff"/>
<rect x="548" y="419" width="4" height="1" fill="#ff00ff"/>
<rect x="548" y="415" width="1" height="5" fill="#ff00ff"/>
<rect x="551" y="415" width="1" height="5" fill="#ff00ff"/>
<rect x="564" y="415" width="4" height="1" fill="#ff00ff"/>
<rect x="564" y="419" width="4" height="1" fill="#ff00ff"/>
<rect x="564" y="415" width="1" height="5" fill="#ff00ff"/>
<rect x="567" y="415" width="1" height="5" fill="#ff00ff"/>
<rect x="582" y="415" width="4" height="1" fill="#ff00ff"/>
<rect x="582" y="419" width="4" height="1" fill="#ff00ff"/>
<rect x="582" y="415" width="1" height="5" fill="#ff00ff"/>
<rect x="585" y="415" width="1" height="5" fill="#ff00ff"/>
<rect x="480" y="444" width="105" height="2" fill="#ff00ff"/>
<rect x="480" y="443" width="4" height="1" fill="#ff00ff"/>
<rect x="480" y="447" width="4" height="1" fill="#ff00ff"/>
<rect x="480" y="443" width="1" height="5" fill="#ff00ff"/>
<rect x="483" y="443" width="1" height="5" fill="#ff00ff"/>
<rect x="513" y="443" width="4" height="1" fill="#ff00ff"/>
<rect x="513" y="447" width="4" height="1" fill="#ff00ff"/>
<rect x="513" y="443" width="1" height="5" fill="#ff00ff"/>
<rect x="516" y="443" width="1" height="5" fill="#ff00ff"/>
<rect x="548" y="443" width="4" height="1" fill="#ff00ff"/>
<rect x="548" y="447" width="4" height="1" fill="#ff00ff"/>
<rect x="548" y="443" width="1" height="5" fill="#ff00ff"/>
<rect x="551" y="443" width="1" height="5" fill="#ff00ff"/>
<rect x="564" y="443" width="4" height="1" fill="#ff00ff"/>
<rect x="564" y="447" width="4" height="1" fill="#ff00ff"/>
<rect x="564" y="443" width="1" height="5" fill="#ff00ff"/>
<rect x="567" y="443" width="1" height="5" fill="#ff00ff"/>
<rect x="582" y="443" width="4" height="1" fill="#ff00ff"/>
<rect x="582" y="447" width="4" height="1" fill="#ff00ff"/>
<rect x="582" y="443" width="1" height="5" fill="#ff00ff"/>
<rect x="585" y="443" width="1" height="5" fill="#ff00ff"/>
<rect x="470" y="389" width="12" height="1" fill="#ff00ff"/>
<rect x="582" y="389" width="9" height="1" fill="#ff00ff"/>
<rect x="505" y="275" width="1" height="198" fill="#00ffff"/>
<rect x="509" y="275" width="1" height="198" fill="#00ffff"/>
<rect x="502" y="287" width="6" height="3.5" fill="#00ffff"/>
<rect x="502" y="315" width="6" height="3.5" fill="#00ffff"/>
<rect x="502" y="344" width="6" height="3.5" fill="#00ffff"/>
<rect x="502" y="373" width="6" height="3.5" fill="#00ffff"/>
<rect x="502" y="401" width="6" height="3.5" fill="#00ffff"/>
<rect x="502" y="430" width="6" height="3.5" fill="#00ffff"/>
<rect x="502" y="458" width="6" height="3.5" fill="#00ffff"/>
<rect x="480" y="298" width="10" height="2" fill="#00ffff"/>
<rect x="576" y="298" width="12" height="2" fill="#00ffff"/>
<line x1="524" y1="274" x2="548" y2="287" stroke="#ff00ff" stroke-width="1"/>
<line x1="520" y1="275" x2="546" y2="289" stroke="#ff00ff" stroke-width="1"/>
<rect x="538" y="285" width="10" height="1" fill="#00ffff"/>
<rect x="538" y="287.5" width="10" height="2" fill="#00ffff"/>
<rect x="538" y="290.5" width="10" height="1" fill="#00ffff"/>
<rect x="540" y="292" width="8" height="1" fill="#ff0000"/>
<line x1="534" y1="296" x2="541" y2="292.5" stroke="#ff0000" stroke-width="1.5"/>
<rect x="526.9" y="290.2" width="1.3" height="10.300000000000011" fill="#0000ff"/>
<rect x="530.1999999999999" y="288.09999999999997" width="1.3" height="11.400000000000034" fill="#0000ff"/>
<rect x="533.3" y="286.0" width="1.3" height="12.5" fill="#0000ff"/>
<rect x="536.5" y="283.9" width="1.3" height="13.600000000000023" fill="#0000ff"/>
<line x1="526.5" y1="291.3" x2="538.5" y2="283.6" stroke="#0000ff" stroke-width="1.3"/>
<line x1="527" y1="300.5" x2="538" y2="296.5" stroke="#0000ff" stroke-width="1.1"/>
<rect x="531.0" y="297.5" width="1.3" height="5.5" fill="#0000ff"/>
<rect x="534.0" y="297.0" width="1.3" height="8.199999999999989" fill="#0000ff"/>
<rect x="536.9" y="296.5" width="1.3" height="10.5" fill="#0000ff"/>
<line x1="531" y1="303" x2="538" y2="307.5" stroke="#0000ff" stroke-width="1.1"/>
<rect x="516" y="279" width="11" height="21" fill="#00ff00"/>
<circle cx="521.5" cy="284.2" r="2.3" fill="#00ff00" stroke="#000000" stroke-width="1.1"/>
<rect x="518.6" y="281" width="1.6" height="1.4" fill="#000000"/>
<rect x="522.9" y="281" width="1.6" height="1.4" fill="#000000"/>
<rect x="520.5" y="283.6" width="2" height="1" fill="#000000"/>
<rect x="517.5" y="290" width="2" height="1" fill="#ff0000"/>
<rect x="519.4" y="293.5" width="1.6" height="6" fill="#000000"/>
<rect x="522.4" y="293.5" width="1.6" height="6" fill="#000000"/>
<rect x="549.5" y="278.5" width="4.5" height="5" fill="#00ff00"/>
<rect x="551.3" y="280" width="1.2" height="2" fill="#000000"/>
<rect x="554" y="276" width="10" height="2.5" fill="#00ffff"/>
<rect x="554" y="279" width="10.5" height="21" fill="#ff0000"/>
<rect x="556.5" y="281.5" width="4.5" height="16" fill="#000000"/>
<line x1="557.5" y1="283" x2="560" y2="287" stroke="#ff0000" stroke-width="1"/>
<rect x="556.5" y="289" width="2.5" height="1" fill="#ff0000"/>
<rect x="480" y="327" width="10" height="2" fill="#00ffff"/>
<rect x="576" y="327" width="12" height="2" fill="#00ffff"/>
<line x1="524" y1="302" x2="548" y2="315" stroke="#ff00ff" stroke-width="1"/>
<line x1="520" y1="303" x2="546" y2="317" stroke="#ff00ff" stroke-width="1"/>
<rect x="538" y="313" width="10" height="1" fill="#00ffff"/>
<rect x="538" y="315.5" width="10" height="2" fill="#00ffff"/>
<rect x="538" y="318.5" width="10" height="1" fill="#00ffff"/>
<rect x="540" y="320" width="8" height="1" fill="#ff0000"/>
<line x1="534" y1="324" x2="541" y2="320.5" stroke="#ff0000" stroke-width="1.5"/>
<rect x="526.9" y="318.2" width="1.3" height="10.300000000000011" fill="#0000ff"/>
<rect x="530.1999999999999" y="316.09999999999997" width="1.3" height="11.400000000000034" fill="#0000ff"/>
<rect x="533.3" y="314.0" width="1.3" height="12.5" fill="#0000ff"/>
<rect x="536.5" y="311.9" width="1.3" height="13.600000000000023" fill="#0000ff"/>
<line x1="526.5" y1="319.3" x2="538.5" y2="311.6" stroke="#0000ff" stroke-width="1.3"/>
<line x1="527" y1="328.5" x2="538" y2="324.5" stroke="#0000ff" stroke-width="1.1"/>
<rect x="531.0" y="325.5" width="1.3" height="5.5" fill="#0000ff"/>
<rect x="534.0" y="325.0" width="1.3" height="8.199999999999989" fill="#0000ff"/>
<rect x="536.9" y="324.5" width="1.3" height="10.899999999999977" fill="#0000ff"/>
<line x1="531" y1="331" x2="538" y2="335.5" stroke="#0000ff" stroke-width="1.1"/>
<rect x="516" y="307" width="11" height="22" fill="#00ff00"/>
<circle cx="521.5" cy="312.2" r="2.3" fill="#00ff00" stroke="#000000" stroke-width="1.1"/>
<rect x="518.6" y="309" width="1.6" height="1.4" fill="#000000"/>
<rect x="522.9" y="309" width="1.6" height="1.4" fill="#000000"/>
<rect x="520.5" y="311.6" width="2" height="1" fill="#000000"/>
<rect x="517.5" y="318" width="2" height="1" fill="#ff0000"/>
<rect x="519.4" y="321.5" width="1.6" height="6" fill="#000000"/>
<rect x="522.4" y="321.5" width="1.6" height="6" fill="#000000"/>
<rect x="549.5" y="306.5" width="4.5" height="5" fill="#00ff00"/>
<rect x="551.3" y="308" width="1.2" height="2" fill="#000000"/>
<rect x="554" y="304" width="10" height="2.5" fill="#00ffff"/>
<rect x="554" y="307" width="10.5" height="22" fill="#ff0000"/>
<rect x="556.5" y="309.5" width="4.5" height="17" fill="#000000"/>
<line x1="557.5" y1="311" x2="560" y2="315" stroke="#ff0000" stroke-width="1"/>
<rect x="556.5" y="317" width="2.5" height="1" fill="#ff0000"/>
<rect x="480" y="356" width="10" height="2" fill="#00ffff"/>
<rect x="576" y="356" width="12" height="2" fill="#00ffff"/>
<line x1="524" y1="331" x2="548" y2="344" stroke="#ff00ff" stroke-width="1"/>
<line x1="520" y1="332" x2="546" y2="346" stroke="#ff00ff" stroke-width="1"/>
<rect x="538" y="342" width="10" height="1" fill="#00ffff"/>
<rect x="538" y="344.5" width="10" height="2" fill="#00ffff"/>
<rect x="538" y="347.5" width="10" height="1" fill="#00ffff"/>
<rect x="540" y="349" width="8" height="1" fill="#ff0000"/>
<line x1="534" y1="353" x2="541" y2="349.5" stroke="#ff0000" stroke-width="1.5"/>
<rect x="526.9" y="347.2" width="1.3" height="10.300000000000011" fill="#0000ff"/>
<rect x="530.1999999999999" y="345.09999999999997" width="1.3" height="11.400000000000034" fill="#0000ff"/>
<rect x="533.3" y="343.0" width="1.3" height="12.5" fill="#0000ff"/>
<rect x="536.5" y="340.9" width="1.3" height="13.600000000000023" fill="#0000ff"/>
<line x1="526.5" y1="348.3" x2="538.5" y2="340.6" stroke="#0000ff" stroke-width="1.3"/>
<line x1="527" y1="357.5" x2="538" y2="353.5" stroke="#0000ff" stroke-width="1.1"/>
<rect x="531.0" y="354.5" width="1.3" height="5.5" fill="#0000ff"/>
<rect x="534.0" y="354.0" width="1.3" height="8.199999999999989" fill="#0000ff"/>
<rect x="536.9" y="353.5" width="1.3" height="10.899999999999977" fill="#0000ff"/>
<line x1="531" y1="360" x2="538" y2="364.5" stroke="#0000ff" stroke-width="1.1"/>
<rect x="516" y="336" width="11" height="22" fill="#00ff00"/>
<circle cx="521.5" cy="341.2" r="2.3" fill="#00ff00" stroke="#000000" stroke-width="1.1"/>
<rect x="518.6" y="338" width="1.6" height="1.4" fill="#000000"/>
<rect x="522.9" y="338" width="1.6" height="1.4" fill="#000000"/>
<rect x="520.5" y="340.6" width="2" height="1" fill="#000000"/>
<rect x="517.5" y="347" width="2" height="1" fill="#ff0000"/>
<rect x="519.4" y="350.5" width="1.6" height="6" fill="#000000"/>
<rect x="522.4" y="350.5" width="1.6" height="6" fill="#000000"/>
<rect x="549.5" y="335.5" width="4.5" height="5" fill="#00ff00"/>
<rect x="551.3" y="337" width="1.2" height="2" fill="#000000"/>
<rect x="554" y="333" width="10" height="2.5" fill="#00ffff"/>
<rect x="554" y="336" width="10.5" height="22" fill="#ff0000"/>
<rect x="556.5" y="338.5" width="4.5" height="17" fill="#000000"/>
<line x1="557.5" y1="340" x2="560" y2="344" stroke="#ff0000" stroke-width="1"/>
<rect x="556.5" y="346" width="2.5" height="1" fill="#ff0000"/>
<rect x="480" y="384" width="10" height="2" fill="#00ffff"/>
<rect x="576" y="384" width="12" height="2" fill="#00ffff"/>
<line x1="524" y1="360" x2="548" y2="373" stroke="#ff00ff" stroke-width="1"/>
<line x1="520" y1="361" x2="546" y2="375" stroke="#ff00ff" stroke-width="1"/>
<rect x="538" y="371" width="10" height="1" fill="#00ffff"/>
<rect x="538" y="373.5" width="10" height="2" fill="#00ffff"/>
<rect x="538" y="376.5" width="10" height="1" fill="#00ffff"/>
<rect x="540" y="378" width="8" height="1" fill="#ff0000"/>
<line x1="534" y1="382" x2="541" y2="378.5" stroke="#ff0000" stroke-width="1.5"/>
<rect x="526.9" y="376.2" width="1.3" height="10.300000000000011" fill="#0000ff"/>
<rect x="530.1999999999999" y="374.09999999999997" width="1.3" height="11.400000000000034" fill="#0000ff"/>
<rect x="533.3" y="372.0" width="1.3" height="12.5" fill="#0000ff"/>
<rect x="536.5" y="369.9" width="1.3" height="13.600000000000023" fill="#0000ff"/>
<line x1="526.5" y1="377.3" x2="538.5" y2="369.6" stroke="#0000ff" stroke-width="1.3"/>
<line x1="527" y1="386.5" x2="538" y2="382.5" stroke="#0000ff" stroke-width="1.1"/>
<rect x="531.0" y="383.5" width="1.3" height="5.5" fill="#0000ff"/>
<rect x="534.0" y="383.0" width="1.3" height="8.199999999999989" fill="#0000ff"/>
<rect x="536.9" y="382.5" width="1.3" height="10.5" fill="#0000ff"/>
<line x1="531" y1="389" x2="538" y2="393.5" stroke="#0000ff" stroke-width="1.1"/>
<rect x="516" y="365" width="11" height="21" fill="#00ff00"/>
<circle cx="521.5" cy="370.2" r="2.3" fill="#00ff00" stroke="#000000" stroke-width="1.1"/>
<rect x="518.6" y="367" width="1.6" height="1.4" fill="#000000"/>
<rect x="522.9" y="367" width="1.6" height="1.4" fill="#000000"/>
<rect x="520.5" y="369.6" width="2" height="1" fill="#000000"/>
<rect x="517.5" y="376" width="2" height="1" fill="#ff0000"/>
<rect x="519.4" y="379.5" width="1.6" height="6" fill="#000000"/>
<rect x="522.4" y="379.5" width="1.6" height="6" fill="#000000"/>
<rect x="549.5" y="364.5" width="4.5" height="5" fill="#00ff00"/>
<rect x="551.3" y="366" width="1.2" height="2" fill="#000000"/>
<rect x="554" y="362" width="10" height="2.5" fill="#00ffff"/>
<rect x="554" y="365" width="10.5" height="21" fill="#ff0000"/>
<rect x="556.5" y="367.5" width="4.5" height="16" fill="#000000"/>
<line x1="557.5" y1="369" x2="560" y2="373" stroke="#ff0000" stroke-width="1"/>
<rect x="556.5" y="375" width="2.5" height="1" fill="#ff0000"/>
<rect x="484" y="413" width="10" height="2" fill="#00ffff"/>
<rect x="569" y="413" width="13" height="2" fill="#00ffff"/>
<line x1="524" y1="388" x2="548" y2="401" stroke="#ff00ff" stroke-width="1"/>
<line x1="520" y1="389" x2="546" y2="403" stroke="#ff00ff" stroke-width="1"/>
<rect x="538" y="399" width="10" height="1" fill="#00ffff"/>
<rect x="538" y="401.5" width="10" height="2" fill="#00ffff"/>
<rect x="538" y="404.5" width="10" height="1" fill="#00ffff"/>
<rect x="540" y="406" width="8" height="1" fill="#ff0000"/>
<line x1="534" y1="410" x2="541" y2="406.5" stroke="#ff0000" stroke-width="1.5"/>
<rect x="526.9" y="404.2" width="1.3" height="10.300000000000011" fill="#0000ff"/>
<rect x="530.1999999999999" y="402.09999999999997" width="1.3" height="11.400000000000034" fill="#0000ff"/>
<rect x="533.3" y="400.0" width="1.3" height="12.5" fill="#0000ff"/>
<rect x="536.5" y="397.9" width="1.3" height="13.600000000000023" fill="#0000ff"/>
<line x1="526.5" y1="405.3" x2="538.5" y2="397.6" stroke="#0000ff" stroke-width="1.3"/>
<line x1="527" y1="414.5" x2="538" y2="410.5" stroke="#0000ff" stroke-width="1.1"/>
<rect x="531.0" y="411.5" width="1.3" height="5.5" fill="#0000ff"/>
<rect x="534.0" y="411.0" width="1.3" height="8.199999999999989" fill="#0000ff"/>
<rect x="536.9" y="410.5" width="1.3" height="10.899999999999977" fill="#0000ff"/>
<line x1="531" y1="417" x2="538" y2="421.5" stroke="#0000ff" stroke-width="1.1"/>
<rect x="516" y="393" width="11" height="22" fill="#00ff00"/>
<circle cx="521.5" cy="398.2" r="2.3" fill="#00ff00" stroke="#000000" stroke-width="1.1"/>
<rect x="518.6" y="395" width="1.6" height="1.4" fill="#000000"/>
<rect x="522.9" y="395" width="1.6" height="1.4" fill="#000000"/>
<rect x="520.5" y="397.6" width="2" height="1" fill="#000000"/>
<rect x="517.5" y="404" width="2" height="1" fill="#ff0000"/>
<rect x="519.4" y="407.5" width="1.6" height="6" fill="#000000"/>
<rect x="522.4" y="407.5" width="1.6" height="6" fill="#000000"/>
<rect x="549.5" y="392.5" width="4.5" height="5" fill="#00ff00"/>
<rect x="551.3" y="394" width="1.2" height="2" fill="#000000"/>
<rect x="554" y="390" width="10" height="2.5" fill="#00ffff"/>
<rect x="554" y="393" width="10.5" height="22" fill="#ff0000"/>
<rect x="556.5" y="395.5" width="4.5" height="17" fill="#000000"/>
<line x1="557.5" y1="397" x2="560" y2="401" stroke="#ff0000" stroke-width="1"/>
<rect x="556.5" y="403" width="2.5" height="1" fill="#ff0000"/>
<line x1="524" y1="417" x2="548" y2="430" stroke="#ff00ff" stroke-width="1"/>
<line x1="520" y1="418" x2="546" y2="432" stroke="#ff00ff" stroke-width="1"/>
<rect x="538" y="428" width="10" height="1" fill="#00ffff"/>
<rect x="538" y="430.5" width="10" height="2" fill="#00ffff"/>
<rect x="538" y="433.5" width="10" height="1" fill="#00ffff"/>
<rect x="540" y="435" width="8" height="1" fill="#ff0000"/>
<line x1="534" y1="439" x2="541" y2="435.5" stroke="#ff0000" stroke-width="1.5"/>
<rect x="526.9" y="433.2" width="1.3" height="10.300000000000011" fill="#0000ff"/>
<rect x="530.1999999999999" y="431.09999999999997" width="1.3" height="11.400000000000034" fill="#0000ff"/>
<rect x="533.3" y="429.0" width="1.3" height="12.5" fill="#0000ff"/>
<rect x="536.5" y="426.9" width="1.3" height="13.600000000000023" fill="#0000ff"/>
<line x1="526.5" y1="434.3" x2="538.5" y2="426.6" stroke="#0000ff" stroke-width="1.3"/>
<line x1="527" y1="443.5" x2="538" y2="439.5" stroke="#0000ff" stroke-width="1.1"/>
<rect x="531.0" y="440.5" width="1.3" height="5.5" fill="#0000ff"/>
<rect x="534.0" y="440.0" width="1.3" height="8.199999999999989" fill="#0000ff"/>
<rect x="536.9" y="439.5" width="1.3" height="10.5" fill="#0000ff"/>
<line x1="531" y1="446" x2="538" y2="450.5" stroke="#0000ff" stroke-width="1.1"/>
<rect x="516" y="422" width="11" height="2" fill="#00ff00"/>
<rect x="516" y="442" width="11" height="2" fill="#00ff00"/>
<rect x="516" y="422" width="2" height="22" fill="#00ff00"/>
<rect x="525" y="422" width="2" height="22" fill="#00ff00"/>
<rect x="525" y="431" width="1" height="2" fill="#ff0000"/>
<rect x="549.5" y="421.5" width="4.5" height="5" fill="#00ff00"/>
<rect x="551.3" y="423" width="1.2" height="2" fill="#000000"/>
<line x1="524" y1="445" x2="548" y2="458" stroke="#ff00ff" stroke-width="1"/>
<line x1="520" y1="446" x2="546" y2="460" stroke="#ff00ff" stroke-width="1"/>
<rect x="538" y="456" width="10" height="1" fill="#00ffff"/>
<rect x="538" y="458.5" width="10" height="2" fill="#00ffff"/>
<rect x="538" y="461.5" width="10" height="1" fill="#00ffff"/>
<rect x="540" y="463" width="8" height="1" fill="#ff0000"/>
<line x1="534" y1="467" x2="541" y2="463.5" stroke="#ff0000" stroke-width="1.5"/>
<rect x="526.9" y="461.2" width="1.3" height="10.300000000000011" fill="#0000ff"/>
<rect x="530.1999999999999" y="459.09999999999997" width="1.3" height="11.400000000000034" fill="#0000ff"/>
<rect x="533.3" y="457.0" width="1.3" height="12.5" fill="#0000ff"/>
<rect x="536.5" y="454.9" width="1.3" height="13.600000000000023" fill="#0000ff"/>
<line x1="526.5" y1="462.3" x2="538.5" y2="454.6" stroke="#0000ff" stroke-width="1.3"/>
<line x1="527" y1="471.5" x2="538" y2="467.5" stroke="#0000ff" stroke-width="1.1"/>
<rect x="531.0" y="468.5" width="1.3" height="4.5" fill="#0000ff"/>
<rect x="534.0" y="468.0" width="1.3" height="5.0" fill="#0000ff"/>
<rect x="536.9" y="467.5" width="1.3" height="5.5" fill="#0000ff"/>
<rect x="516" y="450" width="11" height="2" fill="#00ff00"/>
<rect x="516" y="471" width="11" height="2" fill="#00ff00"/>
<rect x="516" y="450" width="2" height="23" fill="#00ff00"/>
<rect x="525" y="450" width="2" height="23" fill="#00ff00"/>
<rect x="525" y="459" width="1" height="2" fill="#ff0000"/>
<rect x="549.5" y="449.5" width="4.5" height="5" fill="#00ff00"/>
<rect x="551.3" y="451" width="1.2" height="2" fill="#000000"/>
<rect x="553" y="450" width="11" height="1" fill="#ff0000"/>
<rect x="553" y="472" width="11" height="1" fill="#ff0000"/>
<rect x="553" y="450" width="1" height="23" fill="#ff0000"/>
<rect x="563" y="450" width="1" height="23" fill="#ff0000"/>
<rect x="555" y="452" width="7" height="1" fill="#ff0000"/>
<rect x="555" y="472" width="7" height="1" fill="#ff0000"/>
<rect x="555" y="452" width="1" height="21" fill="#ff0000"/>
<rect x="561" y="452" width="1" height="21" fill="#ff0000"/>
<rect x="553" y="449" width="13" height="1" fill="#ff0000"/>
<rect x="560" y="461" width="2" height="1.5" fill="#ff0000"/>
<rect x="550" y="469" width="13" height="1.5" fill="#00ffff"/>
<rect x="571" y="469" width="10" height="1.5" fill="#00ffff"/>
<rect x="488" y="275" width="1" height="7" fill="#00ffff"/>
<rect x="490" y="278" width="10" height="1" fill="#ff0000"/>
<rect x="490" y="280.5" width="8" height="1.5" fill="#ff0000"/>
<rect x="495" y="390" width="1" height="26" fill="#ff00ff"/>
<rect x="482" y="390" width="14" height="1" fill="#ff00ff"/>
<rect x="484" y="391.5" width="11" height="1" fill="#00ffff"/>
<rect x="479" y="423" width="2" height="22" fill="#ff0000"/>
<rect x="479" y="443" width="19" height="2" fill="#ff0000"/>
<rect x="496.5" y="434" width="1.5" height="10" fill="#ff0000"/>
<rect x="497" y="423" width="1" height="11" fill="#00ffff"/>
<rect x="494" y="446" width="1" height="27" fill="#ff00ff"/>
<rect x="495" y="417" width="4" height="1" fill="#ff00ff"/>
<rect x="495" y="422" width="4" height="1" fill="#ff00ff"/>
<rect x="495" y="417" width="1" height="6" fill="#ff00ff"/>
<rect x="498" y="417" width="1" height="6" fill="#ff00ff"/>
<rect x="566" y="389" width="1" height="84" fill="#ff00ff"/>
<rect x="563" y="418" width="1" height="26" fill="#ff00ff"/>
<rect x="552" y="442.5" width="13" height="1.5" fill="#00ffff"/>
<rect x="571" y="442.5" width="9" height="1.5" fill="#00ffff"/>
<rect x="550" y="420" width="16" height="1" fill="#ff00ff"/>
<rect x="550" y="448" width="16" height="1" fill="#ff00ff"/>
<rect x="567" y="447" width="15" height="1" fill="#ff00ff"/>
<rect x="477" y="473" width="109" height="9" fill="#00ff00"/>
<rect x="485" y="476.5" width="94" height="3.5" fill="#00ffff"/>
<rect x="477" y="473" width="10" height="13" fill="#00ff00"/>
<rect x="479" y="474.5" width="6.5" height="10.5" fill="#00ffff"/>
<rect x="507" y="473" width="9" height="13" fill="#00ff00"/>
<rect x="509" y="474.5" width="5.5" height="10.5" fill="#00ffff"/>
<rect x="532" y="473" width="9" height="13" fill="#00ff00"/>
<rect x="534" y="474.5" width="5.5" height="10.5" fill="#00ffff"/>
<rect x="577" y="473" width="9" height="13" fill="#00ff00"/>
<rect x="579" y="474.5" width="5.5" height="10.5" fill="#00ffff"/>
<rect x="474" y="484" width="5" height="1" fill="#ffff00"/>
<rect x="484" y="484" width="4" height="1" fill="#ffff00"/>
<rect x="505" y="484" width="4" height="1" fill="#ffff00"/>
<rect x="575" y="483" width="5" height="1" fill="#ffff00"/>
<rect x="584" y="483" width="5" height="1" fill="#ffff00"/>
<rect x="514" y="486.5" width="31" height="4" fill="#ff0000"/>
<rect x="450" y="459" width="30" height="3" fill="#00ffff"/>
<rect x="460" y="457.5" width="10" height="1.5" fill="#ff0000"/>
<rect x="585" y="468" width="23" height="2" fill="#00ffff"/>
<rect x="588" y="466" width="10" height="2" fill="#ff0000"/>
<rect x="599" y="301" width="15" height="2" fill="#00ffff"/>
<rect x="599" y="330" width="15" height="2" fill="#00ffff"/>
<rect x="599" y="359" width="15" height="2" fill="#00ffff"/>
<rect x="599" y="387" width="15" height="2" fill="#00ffff"/>
<rect x="599" y="416" width="13" height="2" fill="#00ffff"/>
<rect x="608" y="444" width="8" height="2" fill="#00ffff"/>
<rect x="619" y="234.5" width="5" height="1.5" fill="#ff0000"/>
<rect x="618" y="236" width="7" height="1.5" fill="#00ffff"/>
<rect x="619" y="260.0" width="5" height="1.5" fill="#ff0000"/>
<rect x="618" y="261.5" width="7" height="1.5" fill="#00ffff"/>
<rect x="618" y="266" width="7" height="1.5" fill="#ff0000"/>
<rect x="618" y="268" width="7" height="1.5" fill="#00ffff"/>
<rect x="619" y="271.5" width="5" height="1.5" fill="#ff0000"/>
<rect x="618" y="273" width="7" height="1.5" fill="#00ffff"/>
<rect x="619" y="292.0" width="5" height="1.5" fill="#ff0000"/>
<rect x="618" y="293.5" width="7" height="1.5" fill="#00ffff"/>
<rect x="618" y="300.5" width="7" height="1.5" fill="#ff0000"/>
<rect x="618" y="303" width="7" height="1.5" fill="#00ffff"/>
<rect x="619" y="305.0" width="5" height="1.5" fill="#ff0000"/>
<rect x="618" y="306.5" width="7" height="1.5" fill="#00ffff"/>
<rect x="619" y="319.5" width="5" height="1.5" fill="#ff0000"/>
<rect x="618" y="321" width="7" height="1.5" fill="#00ffff"/>
<rect x="619" y="329.0" width="5" height="1.5" fill="#ff0000"/>
<rect x="618" y="330.5" width="7" height="1.5" fill="#00ffff"/>
<rect x="619" y="333.5" width="5" height="1.5" fill="#ff0000"/>
<rect x="618" y="335" width="7" height="1.5" fill="#00ffff"/>
<rect x="619" y="348.5" width="5" height="1.5" fill="#ff0000"/>
<rect x="618" y="350" width="7" height="1.5" fill="#00ffff"/>
<rect x="619" y="358.0" width="5" height="1.5" fill="#ff0000"/>
<rect x="618" y="359.5" width="7" height="1.5" fill="#00ffff"/>
<rect x="619" y="362.5" width="5" height="1.5" fill="#ff0000"/>
<rect x="618" y="364" width="7" height="1.5" fill="#00ffff"/>
<rect x="618" y="377" width="7" height="1.5" fill="#ff0000"/>
<rect x="618" y="379" width="7" height="1.5" fill="#00ffff"/>
<rect x="618" y="386" width="7" height="1.5" fill="#ff0000"/>
<rect x="618" y="388" width="7" height="1.5" fill="#00ffff"/>
<rect x="618" y="391" width="7" height="1.5" fill="#ff0000"/>
<rect x="618" y="393" width="7" height="1.5" fill="#00ffff"/>
<rect x="619" y="405.5" width="5" height="1.5" fill="#ff0000"/>
<rect x="618" y="407" width="7" height="1.5" fill="#00ffff"/>
<rect x="619" y="414.5" width="5" height="1.5" fill="#ff0000"/>
<rect x="618" y="416" width="7" height="1.5" fill="#00ffff"/>
<rect x="618" y="426" width="7" height="1.5" fill="#00ffff"/>
<rect x="619" y="443.0" width="5" height="1.5" fill="#ff0000"/>
<rect x="618" y="444.5" width="7" height="1.5" fill="#00ffff"/>
<rect x="619" y="471.5" width="5" height="1.5" fill="#ff0000"/>
<rect x="618" y="473" width="7" height="1.5" fill="#00ffff"/>
<rect x="751.5" y="239.0" width="5.0" height="1.5" fill="#ff0000"/>
<rect x="750.5" y="240.5" width="7.0" height="1.5" fill="#00ffff"/>
<rect x="751.5" y="264.5" width="5.0" height="1.5" fill="#ff0000"/>
<rect x="750.5" y="266" width="7.0" height="1.5" fill="#00ffff"/>
<rect x="750.5" y="270" width="7.0" height="1.5" fill="#ff0000"/>
<rect x="750.5" y="272" width="7.0" height="1.5" fill="#00ffff"/>
<rect x="751.5" y="275.5" width="5.0" height="1.5" fill="#ff0000"/>
<rect x="750.5" y="277" width="7.0" height="1.5" fill="#00ffff"/>
<rect x="751.5" y="291.0" width="5.0" height="1.5" fill="#ff0000"/>
<rect x="750.5" y="292.5" width="7.0" height="1.5" fill="#00ffff"/>
<rect x="750.5" y="300" width="7.0" height="1.5" fill="#ff0000"/>
<rect x="750.5" y="302" width="7.0" height="1.5" fill="#00ffff"/>
<rect x="751.5" y="304.0" width="5.0" height="1.5" fill="#ff0000"/>
<rect x="750.5" y="305.5" width="7.0" height="1.5" fill="#00ffff"/>
<rect x="751.5" y="318.5" width="5.0" height="1.5" fill="#ff0000"/>
<rect x="750.5" y="320" width="7.0" height="1.5" fill="#00ffff"/>
<rect x="751.5" y="328.0" width="5.0" height="1.5" fill="#ff0000"/>
<rect x="750.5" y="329.5" width="7.0" height="1.5" fill="#00ffff"/>
<rect x="751.5" y="332.5" width="5.0" height="1.5" fill="#ff0000"/>
<rect x="750.5" y="334" width="7.0" height="1.5" fill="#00ffff"/>
<rect x="751.5" y="347.5" width="5.0" height="1.5" fill="#ff0000"/>
<rect x="750.5" y="349" width="7.0" height="1.5" fill="#00ffff"/>
<rect x="751.5" y="357.0" width="5.0" height="1.5" fill="#ff0000"/>
<rect x="750.5" y="358.5" width="7.0" height="1.5" fill="#00ffff"/>
<rect x="751.5" y="361.5" width="5.0" height="1.5" fill="#ff0000"/>
<rect x="750.5" y="363" width="7.0" height="1.5" fill="#00ffff"/>
<rect x="750.5" y="376" width="7.0" height="1.5" fill="#ff0000"/>
<rect x="750.5" y="378" width="7.0" height="1.5" fill="#00ffff"/>
<rect x="750.5" y="385" width="7.0" height="1.5" fill="#ff0000"/>
<rect x="750.5" y="387" width="7.0" height="1.5" fill="#00ffff"/>
<rect x="750.5" y="390" width="7.0" height="1.5" fill="#ff0000"/>
<rect x="750.5" y="392" width="7.0" height="1.5" fill="#00ffff"/>
<rect x="751.5" y="404.5" width="5.0" height="1.5" fill="#ff0000"/>
<rect x="750.5" y="406" width="7.0" height="1.5" fill="#00ffff"/>
<rect x="751.5" y="413.5" width="5.0" height="1.5" fill="#ff0000"/>
<rect x="750.5" y="415" width="7.0" height="1.5" fill="#00ffff"/>
<rect x="750.5" y="425" width="7.0" height="1.5" fill="#00ffff"/>
<rect x="751.5" y="442.0" width="5.0" height="1.5" fill="#ff0000"/>
<rect x="750.5" y="443.5" width="7.0" height="1.5" fill="#00ffff"/>
<rect x="751.5" y="470.5" width="5.0" height="1.5" fill="#ff0000"/>
<rect x="750.5" y="472" width="7.0" height="1.5" fill="#00ffff"/>
<rect x="617" y="424" width="11" height="1" fill="#ff0000"/>
<rect x="625" y="426.5" width="10" height="1" fill="#ff0000"/>
<rect x="750" y="424" width="16" height="1" fill="#ff0000"/>
<line x1="634" y1="267" x2="694" y2="246.3" stroke="#ff0000" stroke-width="1.9"/>
<line x1="634" y1="268.6" x2="694" y2="247.9" stroke="#ffff00" stroke-width="1.2"/>
<line x1="634" y1="269.6" x2="694" y2="248.9" stroke="#00ff00" stroke-width="1.1"/>
<rect x="694" y="246" width="38" height="1.4" fill="#ff0000"/>
<rect x="694" y="247.4" width="36" height="0.7" fill="#00ff00"/>
<rect x="694" y="249" width="36" height="1" fill="#ffff00"/>
<rect x="633" y="265.5" width="3" height="3" fill="#ff0000"/>
<rect x="729" y="245" width="4" height="1" fill="#ff00ff"/>
<rect x="673" y="245" width="11" height="1" fill="#ff0000"/>
<rect x="678" y="245" width="1" height="5" fill="#ff0000"/>
<rect x="644" y="257" width="6" height="1" fill="#ff0000"/>
<line x1="640" y1="262" x2="648" y2="258" stroke="#ff0000" stroke-width="1"/>
<rect x="676" y="255" width="54" height="2" fill="#00ff00"/>
<rect x="649" y="264" width="81" height="2" fill="#00ff00"/>
<rect x="648" y="270" width="82" height="2" fill="#00ff00"/>
<rect x="648" y="262" width="2" height="10" fill="#00ff00"/>
<rect x="675" y="253" width="2" height="18" fill="#00ff00"/>
<rect x="694" y="249" width="2" height="22" fill="#00ff00"/>
<rect x="706" y="250" width="2" height="21" fill="#00ff00"/>
<rect x="720" y="250" width="2" height="21" fill="#00ff00"/>
<rect x="655" y="267" width="13" height="1" fill="#ff0000"/>
<rect x="661" y="263" width="1" height="3" fill="#00ffff"/>
<rect x="644" y="266" width="1" height="122" fill="#ff00ff"/>
<rect x="647" y="266" width="1" height="122" fill="#ff00ff"/>
<rect x="729" y="246" width="1" height="226.5" fill="#ff00ff"/>
<rect x="731" y="246" width="1" height="226.5" fill="#ff00ff"/>
<rect x="653" y="386" width="1" height="86.5" fill="#ff00ff"/>
<rect x="655" y="388" width="1" height="84.5" fill="#ff00ff"/>
<rect x="676" y="273" width="1" height="142" fill="#ff00ff"/>
<rect x="678" y="273" width="1" height="142" fill="#ff00ff"/>
<rect x="644" y="272" width="89" height="2" fill="#ff00ff"/>
<rect x="644" y="271" width="4" height="1" fill="#ff00ff"/>
<rect x="644" y="275" width="4" height="1" fill="#ff00ff"/>
<rect x="644" y="271" width="1" height="5" fill="#ff00ff"/>
<rect x="647" y="271" width="1" height="5" fill="#ff00ff"/>
<rect x="676" y="271" width="4" height="1" fill="#ff00ff"/>
<rect x="676" y="275" width="4" height="1" fill="#ff00ff"/>
<rect x="676" y="271" width="1" height="5" fill="#ff00ff"/>
<rect x="679" y="271" width="1" height="5" fill="#ff00ff"/>
<rect x="729" y="271" width="4" height="1" fill="#ff00ff"/>
<rect x="729" y="275" width="4" height="1" fill="#ff00ff"/>
<rect x="729" y="271" width="1" height="5" fill="#ff00ff"/>
<rect x="732" y="271" width="1" height="5" fill="#ff00ff"/>
<rect x="644" y="300" width="89" height="2" fill="#ff00ff"/>
<rect x="644" y="299" width="4" height="1" fill="#ff00ff"/>
<rect x="644" y="303" width="4" height="1" fill="#ff00ff"/>
<rect x="644" y="299" width="1" height="5" fill="#ff00ff"/>
<rect x="647" y="299" width="1" height="5" fill="#ff00ff"/>
<rect x="676" y="299" width="4" height="1" fill="#ff00ff"/>
<rect x="676" y="303" width="4" height="1" fill="#ff00ff"/>
<rect x="676" y="299" width="1" height="5" fill="#ff00ff"/>
<rect x="679" y="299" width="1" height="5" fill="#ff00ff"/>
<rect x="729" y="299" width="4" height="1" fill="#ff00ff"/>
<rect x="729" y="303" width="4" height="1" fill="#ff00ff"/>
<rect x="729" y="299" width="1" height="5" fill="#ff00ff"/>
<rect x="732" y="299" width="1" height="5" fill="#ff00ff"/>
<rect x="644" y="329" width="89" height="2" fill="#ff00ff"/>
<rect x="644" y="328" width="4" height="1" fill="#ff00ff"/>
<rect x="644" y="332" width="4" height="1" fill="#ff00ff"/>
<rect x="644" y="328" width="1" height="5" fill="#ff00ff"/>
<rect x="647" y="328" width="1" height="5" fill="#ff00ff"/>
<rect x="676" y="328" width="4" height="1" fill="#ff00ff"/>
<rect x="676" y="332" width="4" height="1" fill="#ff00ff"/>
<rect x="676" y="328" width="1" height="5" fill="#ff00ff"/>
<rect x="679" y="328" width="1" height="5" fill="#ff00ff"/>
<rect x="729" y="328" width="4" height="1" fill="#ff00ff"/>
<rect x="729" y="332" width="4" height="1" fill="#ff00ff"/>
<rect x="729" y="328" width="1" height="5" fill="#ff00ff"/>
<rect x="732" y="328" width="1" height="5" fill="#ff00ff"/>
<rect x="644" y="357.5" width="89" height="2" fill="#ff00ff"/>
<rect x="644" y="356.5" width="4" height="1" fill="#ff00ff"/>
<rect x="644" y="360.5" width="4" height="1" fill="#ff00ff"/>
<rect x="644" y="356.5" width="1" height="5.0" fill="#ff00ff"/>
<rect x="647" y="356.5" width="1" height="5.0" fill="#ff00ff"/>
<rect x="676" y="356.5" width="4" height="1" fill="#ff00ff"/>
<rect x="676" y="360.5" width="4" height="1" fill="#ff00ff"/>
<rect x="676" y="356.5" width="1" height="5.0" fill="#ff00ff"/>
<rect x="679" y="356.5" width="1" height="5.0" fill="#ff00ff"/>
<rect x="729" y="356.5" width="4" height="1" fill="#ff00ff"/>
<rect x="729" y="360.5" width="4" height="1" fill="#ff00ff"/>
<rect x="729" y="356.5" width="1" height="5.0" fill="#ff00ff"/>
<rect x="732" y="356.5" width="1" height="5.0" fill="#ff00ff"/>
<rect x="644" y="386" width="89" height="2" fill="#ff00ff"/>
<rect x="644" y="385" width="4" height="1" fill="#ff00ff"/>
<rect x="644" y="389" width="4" height="1" fill="#ff00ff"/>
<rect x="644" y="385" width="1" height="5" fill="#ff00ff"/>
<rect x="647" y="385" width="1" height="5" fill="#ff00ff"/>
<rect x="676" y="385" width="4" height="1" fill="#ff00ff"/>
<rect x="676" y="389" width="4" height="1" fill="#ff00ff"/>
<rect x="676" y="385" width="1" height="5" fill="#ff00ff"/>
<rect x="679" y="385" width="1" height="5" fill="#ff00ff"/>
<rect x="729" y="385" width="4" height="1" fill="#ff00ff"/>
<rect x="729" y="389" width="4" height="1" fill="#ff00ff"/>
<rect x="729" y="385" width="1" height="5" fill="#ff00ff"/>
<rect x="732" y="385" width="1" height="5" fill="#ff00ff"/>
<rect x="653" y="415" width="80" height="2" fill="#ff00ff"/>
<rect x="653" y="414" width="4" height="1" fill="#ff00ff"/>
<rect x="653" y="418" width="4" height="1" fill="#ff00ff"/>
<rect x="653" y="414" width="1" height="5" fill="#ff00ff"/>
<rect x="656" y="414" width="1" height="5" fill="#ff00ff"/>
<rect x="676" y="414" width="4" height="1" fill="#ff00ff"/>
<rect x="676" y="418" width="4" height="1" fill="#ff00ff"/>
<rect x="676" y="414" width="1" height="5" fill="#ff00ff"/>
<rect x="679" y="414" width="1" height="5" fill="#ff00ff"/>
<rect x="729" y="414" width="4" height="1" fill="#ff00ff"/>
<rect x="729" y="418" width="4" height="1" fill="#ff00ff"/>
<rect x="729" y="414" width="1" height="5" fill="#ff00ff"/>
<rect x="732" y="414" width="1" height="5" fill="#ff00ff"/>
<rect x="653" y="443" width="80" height="2" fill="#ff00ff"/>
<rect x="653" y="442" width="4" height="1" fill="#ff00ff"/>
<rect x="653" y="446" width="4" height="1" fill="#ff00ff"/>
<rect x="653" y="442" width="1" height="5" fill="#ff00ff"/>
<rect x="656" y="442" width="1" height="5" fill="#ff00ff"/>
<rect x="676" y="442" width="4" height="1" fill="#ff00ff"/>
<rect x="676" y="446" width="4" height="1" fill="#ff00ff"/>
<rect x="676" y="442" width="1" height="5" fill="#ff00ff"/>
<rect x="679" y="442" width="1" height="5" fill="#ff00ff"/>
<rect x="729" y="442" width="4" height="1" fill="#ff00ff"/>
<rect x="729" y="446" width="4" height="1" fill="#ff00ff"/>
<rect x="729" y="442" width="1" height="5" fill="#ff00ff"/>
<rect x="732" y="442" width="1" height="5" fill="#ff00ff"/>
<rect x="644" y="388" width="12" height="1" fill="#ff00ff"/>
<rect x="718" y="273" width="1" height="199.5" fill="#00ffff"/>
<rect x="721" y="273" width="1" height="199.5" fill="#00ffff"/>
<rect x="715" y="285.5" width="3" height="4" fill="#00ffff"/>
<rect x="715" y="313.5" width="3" height="4" fill="#00ffff"/>
<rect x="715" y="342.5" width="3" height="4" fill="#00ffff"/>
<rect x="715" y="371.0" width="3" height="4" fill="#00ffff"/>
<rect x="715" y="399.5" width="3" height="4" fill="#00ffff"/>
<rect x="715" y="428.5" width="3" height="4" fill="#00ffff"/>
<rect x="715" y="456.5" width="3" height="4" fill="#00ffff"/>
<rect x="678" y="278" width="17" height="21" fill="#ff0000"/>
<rect x="681" y="280.5" width="5.4" height="16.5" fill="#000000"/>
<rect x="689.3" y="280.5" width="3.6" height="16.5" fill="#000000"/>
<rect x="682.8" y="282.5" width="1.6" height="1.6" fill="#ff0000"/>
<rect x="681" y="288" width="5.399999999999977" height="1" fill="#ff0000"/>
<rect x="689.3" y="288.5" width="3.7000000000000455" height="1" fill="#ff0000"/>
<rect x="687" y="289" width="1" height="2" fill="#000000"/>
<rect x="652" y="297" width="13" height="2" fill="#00ffff"/>
<rect x="698" y="297" width="10" height="2" fill="#00ffff"/>
<rect x="678" y="306" width="17" height="22" fill="#ff0000"/>
<rect x="681" y="308.5" width="5.4" height="17.5" fill="#000000"/>
<rect x="689.3" y="308.5" width="3.6" height="17.5" fill="#000000"/>
<rect x="682.8" y="310.5" width="1.6" height="1.6" fill="#ff0000"/>
<rect x="681" y="316" width="5.399999999999977" height="1" fill="#ff0000"/>
<rect x="689.3" y="316.5" width="3.7000000000000455" height="1" fill="#ff0000"/>
<rect x="687" y="317" width="1" height="2" fill="#000000"/>
<rect x="652" y="326" width="13" height="2" fill="#00ffff"/>
<rect x="698" y="326" width="10" height="2" fill="#00ffff"/>
<rect x="678" y="335" width="17" height="21.5" fill="#ff0000"/>
<rect x="681" y="337.5" width="5.4" height="17.0" fill="#000000"/>
<rect x="689.3" y="337.5" width="3.6" height="17.0" fill="#000000"/>
<rect x="682.8" y="339.5" width="1.6" height="1.6" fill="#ff0000"/>
<rect x="681" y="345" width="5.399999999999977" height="1" fill="#ff0000"/>
<rect x="689.3" y="345.5" width="3.7000000000000455" height="1" fill="#ff0000"/>
<rect x="687" y="346" width="1" height="2" fill="#000000"/>
<rect x="652" y="354.5" width="13" height="2" fill="#00ffff"/>
<rect x="698" y="354.5" width="10" height="2" fill="#00ffff"/>
<rect x="678" y="363.5" width="17" height="21.5" fill="#ff0000"/>
<rect x="681" y="366.0" width="5.4" height="17.0" fill="#000000"/>
<rect x="689.3" y="366.0" width="3.6" height="17.0" fill="#000000"/>
<rect x="682.8" y="368.0" width="1.6" height="1.6" fill="#ff0000"/>
<rect x="681" y="373.5" width="5.399999999999977" height="1" fill="#ff0000"/>
<rect x="689.3" y="374.0" width="3.7000000000000455" height="1" fill="#ff0000"/>
<rect x="687" y="374.5" width="1" height="2" fill="#000000"/>
<rect x="652" y="383" width="13" height="2" fill="#00ffff"/>
<rect x="698" y="383" width="10" height="2" fill="#00ffff"/>
<rect x="678" y="392" width="17" height="22" fill="#ff0000"/>
<rect x="681" y="394.5" width="5.4" height="17.5" fill="#000000"/>
<rect x="689.3" y="394.5" width="3.6" height="17.5" fill="#000000"/>
<rect x="682.8" y="396.5" width="1.6" height="1.6" fill="#ff0000"/>
<rect x="681" y="402" width="5.399999999999977" height="1" fill="#ff0000"/>
<rect x="689.3" y="402.5" width="3.7000000000000455" height="1" fill="#ff0000"/>
<rect x="687" y="403" width="1" height="2" fill="#000000"/>
<rect x="660" y="411" width="13" height="3" fill="#00ffff"/>
<rect x="698" y="412" width="10" height="2" fill="#00ffff"/>
<rect x="733" y="300" width="13" height="2" fill="#00ffff"/>
<rect x="733" y="329" width="13" height="2" fill="#00ffff"/>
<rect x="733" y="357.5" width="13" height="2" fill="#00ffff"/>
<rect x="733" y="386" width="13" height="2" fill="#00ffff"/>
<rect x="733" y="415" width="9" height="2" fill="#00ffff"/>
<rect x="736" y="443" width="7" height="2" fill="#00ffff"/>
<rect x="733" y="272" width="6" height="1.5" fill="#00ffff"/>
<rect x="737" y="270" width="7" height="2" fill="#00ffff"/>
<rect x="658" y="274" width="1" height="7" fill="#00ffff"/>
<circle cx="663.6" cy="278.6" r="2.8" fill="#ff0000"/>
<rect x="659" y="277" width="12" height="1" fill="#ff0000"/>
<rect x="654" y="331.5" width="3" height="3" fill="#ff0000"/>
<rect x="651" y="335.5" width="8" height="1" fill="#ff0000"/>
<line x1="664" y1="390" x2="672" y2="390" stroke="#ff0000" stroke-width="1"/>
<line x1="670" y1="387" x2="674" y2="392" stroke="#ff0000" stroke-width="1"/>
<rect x="675" y="390" width="3" height="4" fill="#00ffff"/>
<rect x="677" y="417" width="1" height="55.5" fill="#00ffff"/>
<rect x="707" y="417" width="1" height="26" fill="#ff00ff"/>
<rect x="709" y="417" width="1" height="26" fill="#ff00ff"/>
<rect x="713" y="421" width="14" height="2" fill="#ffff00"/>
<rect x="713" y="442" width="14" height="2" fill="#ffff00"/>
<rect x="713" y="421" width="2" height="23" fill="#ffff00"/>
<rect x="725" y="421" width="2" height="23" fill="#ffff00"/>
<rect x="713" y="430" width="14" height="1.5" fill="#ffff00"/>
<rect x="719" y="422" width="1" height="21" fill="#ffff00"/>
<rect x="710" y="419.5" width="12" height="1.5" fill="#ff0000"/>
<rect x="681" y="438" width="10" height="1.5" fill="#00ffff"/>
<rect x="683" y="440.5" width="6" height="1" fill="#00ffff"/>
<rect x="653" y="472.5" width="80" height="11" fill="#00ffff"/>
<rect x="676" y="474.5" width="52" height="5" fill="#00ff00"/>
<rect x="684" y="476.0" width="14" height="2.5" fill="#00ffff"/>
<rect x="660" y="480.5" width="8" height="3" fill="#000000"/>
<rect x="668" y="479.5" width="6" height="4" fill="#00ff00"/>
<rect x="680" y="480.5" width="18" height="3" fill="#000000"/>
<rect x="704" y="480.5" width="20" height="3" fill="#000000"/>
<rect x="698" y="478.5" width="6" height="5" fill="#00ffff"/>
<rect x="724" y="475.5" width="6" height="8" fill="#00ff00"/>
<rect x="650" y="483.5" width="6" height="1" fill="#ffff00"/>
<rect x="700" y="483.5" width="6" height="1" fill="#ffff00"/>
<rect x="722" y="483.5" width="6" height="1" fill="#ffff00"/>
<rect x="675" y="487" width="31" height="3.5" fill="#ff0000"/>
<rect x="669" y="469" width="4" height="4" fill="#000000"/>
<rect x="669" y="468" width="5" height="1" fill="#ff0000"/>
<rect x="669" y="472" width="5" height="1" fill="#ff0000"/>
<rect x="669" y="468" width="1" height="5" fill="#ff0000"/>
<rect x="673" y="468" width="1" height="5" fill="#ff0000"/>
<rect x="668" y="466.5" width="6" height="1" fill="#ff0000"/>
<rect x="731" y="469" width="4" height="1" fill="#ff0000"/>
<rect x="731" y="473" width="4" height="1" fill="#ff0000"/>
<rect x="731" y="469" width="1" height="5" fill="#ff0000"/>
<rect x="734" y="469" width="1" height="5" fill="#ff0000"/>
<rect x="739" y="471.5" width="7" height="2" fill="#ff0000"/>
<rect x="732" y="459" width="30" height="3" fill="#00ffff"/>
<rect x="742" y="457.5" width="10" height="1.5" fill="#ff0000"/>
<rect x="639" y="467.5" width="14" height="2.5" fill="#00ffff"/>
<rect x="641" y="466" width="9" height="1.5" fill="#ff0000"/>
<rect x="608" y="444" width="8" height="2" fill="#00ffff"/>
<rect x="626" y="471.5" width="8" height="2" fill="#00ffff"/>
<rect x="742" y="443" width="7" height="2" fill="#00ffff"/>
<rect x="752" y="471.5" width="10" height="2" fill="#00ffff"/>
<rect x="394" y="304" width="32" height="1" fill="#00ffff"/>
<rect x="394" y="308" width="30" height="1" fill="#00ffff"/>
<rect x="394" y="320" width="30" height="1" fill="#00ffff"/>
<rect x="394" y="331" width="12" height="2.5" fill="#00ffff"/>
<rect x="396.3" y="308" width="1.2" height="41" fill="#00ffff"/>
<rect x="399.7" y="308" width="1.2" height="41" fill="#00ffff"/>
<rect x="403" y="308" width="1.2" height="41" fill="#00ffff"/>
<rect x="406.3" y="308" width="1.2" height="41" fill="#00ffff"/>
<rect x="409.6" y="308" width="1.2" height="41" fill="#00ffff"/>
<rect x="412.9" y="308" width="1.2" height="41" fill="#00ffff"/>
<rect x="416.2" y="308" width="1.2" height="41" fill="#00ffff"/>
<rect x="419.4" y="308" width="1.2" height="41" fill="#00ffff"/>
<rect x="422.8" y="308" width="1.2" height="41" fill="#00ffff"/>
<rect x="394" y="348.5" width="31" height="1.5" fill="#ff00ff"/>
<rect x="424" y="308" width="1" height="148" fill="#00ffff"/>
<rect x="426" y="308" width="1.5" height="143" fill="#ff00ff"/>
<rect x="432" y="308" width="1" height="143" fill="#00ffff"/>
<rect x="430" y="308" width="3" height="1" fill="#00ffff"/>
<rect x="430" y="450" width="3" height="1" fill="#00ffff"/>
<rect x="420" y="302" width="3.5" height="11" fill="#ff00ff"/>
<rect x="417.5" y="305" width="8" height="3.3" fill="#ff00ff"/>
<line x1="407" y1="349.5" x2="419.5" y2="349.5" stroke="#ffff00" stroke-width="1.6"/>
<line x1="407" y1="349.5" x2="413.5" y2="358.5" stroke="#ffff00" stroke-width="1.6"/>
<line x1="419.5" y1="349.5" x2="413.5" y2="358.5" stroke="#ffff00" stroke-width="1.6"/>
<rect x="411.5" y="352" width="2.5" height="2" fill="#ff0000"/>
<rect x="394" y="349" width="1.5" height="6" fill="#ffff00"/>
<line x1="396.5" y1="349.5" x2="395" y2="355" stroke="#ffff00" stroke-width="1.5"/>
<rect x="413.5" y="356.5" width="11.5" height="1" fill="#00ffff"/>
<rect x="396" y="359" width="17" height="2" fill="#00ffff"/>
<rect x="397" y="355" width="5" height="2" fill="#00ffff"/>
<rect x="415" y="349" width="1" height="23" fill="#00ffff"/>
<rect x="394" y="361.5" width="9" height="2" fill="#ff00ff"/>
<rect x="401.5" y="362" width="1.5" height="5" fill="#ff00ff"/>
<rect x="394" y="366" width="6" height="2" fill="#00ffff"/>
<rect x="396" y="367" width="28" height="1.5" fill="#ff00ff"/>
<rect x="396" y="388.5" width="28" height="1.5" fill="#ff00ff"/>
<rect x="396" y="367" width="1.5" height="23" fill="#ff00ff"/>
<rect x="422.5" y="367" width="1.5" height="23" fill="#ff00ff"/>
<line x1="422.8645717465465" y1="376.4356553495977" x2="414.4692208514878" y2="377.6089138373994" stroke="#0000ff" stroke-width="1.3"/>
<line x1="421.9530975771262" y1="373.7422070843493" x2="414.26206763116505" y2="376.9355517710873" stroke="#0000ff" stroke-width="1.3"/>
<line x1="420.25122176593504" y1="371.38688134676346" x2="413.87527767407613" y2="376.34672033669085" stroke="#0000ff" stroke-width="1.3"/>
<line x1="417.89409474476895" y1="369.5567207449798" x2="413.3395669874475" y2="375.88918018624497" stroke="#0000ff" stroke-width="1.3"/>
<line x1="415.06890216643154" y1="368.3970631432306" x2="412.6974777650981" y2="375.59926578580763" stroke="#0000ff" stroke-width="1.3"/>
<line x1="412.0" y1="368.0" x2="412.0" y2="375.5" stroke="#0000ff" stroke-width="1.3"/>
<line x1="408.93109783356846" y1="368.3970631432306" x2="411.3025222349019" y2="375.59926578580763" stroke="#0000ff" stroke-width="1.3"/>
<line x1="406.10590525523105" y1="369.5567207449798" x2="410.6604330125525" y2="375.88918018624497" stroke="#0000ff" stroke-width="1.3"/>
<line x1="403.74877823406496" y1="371.38688134676346" x2="410.12472232592387" y2="376.34672033669085" stroke="#0000ff" stroke-width="1.3"/>
<line x1="402.0469024228738" y1="373.7422070843493" x2="409.73793236883495" y2="376.9355517710873" stroke="#0000ff" stroke-width="1.3"/>
<line x1="401.1354282534535" y1="376.4356553495977" x2="409.5307791485122" y2="377.6089138373994" stroke="#0000ff" stroke-width="1.3"/>
<rect x="398" y="380" width="23" height="2.5" fill="#00ffff"/>
<rect x="406" y="375" width="6" height="4" fill="#00ffff"/>
<rect x="416" y="377" width="3" height="3" fill="#00ffff"/>
<rect x="400" y="377" width="3" height="2" fill="#00ffff"/>
<rect x="398" y="384.5" width="25" height="1.3" fill="#0000ff"/>
<rect x="398" y="387.5" width="25" height="1.3" fill="#0000ff"/>
<rect x="410" y="378" width="2" height="10.5" fill="#ffff00"/>
<rect x="405" y="381" width="1" height="8" fill="#ff00ff"/>
<rect x="417" y="381" width="1" height="8" fill="#ff00ff"/>
<rect x="429" y="378" width="2" height="4" fill="#00ffff"/>
<rect x="394" y="389.5" width="4" height="1.5" fill="#ff0000"/>
<rect x="396.3" y="393" width="2.7" height="3.5" fill="#00ffff"/>
<rect x="402.5" y="392" width="2.5" height="2.5" fill="#0000ff"/>
<rect x="406" y="392.5" width="4" height="1.3" fill="#ff0000"/>
<rect x="409.3" y="393.5" width="3.7" height="1.8" fill="#00ffff"/>
<rect x="423.5" y="393" width="3.5" height="4" fill="#00ffff"/>
<rect x="394" y="397" width="32" height="1.2" fill="#00ffff"/>
<rect x="394" y="399.5" width="3" height="1.5" fill="#ff0000"/>
<rect x="394" y="401.5" width="29" height="2" fill="#ff00ff"/>
<rect x="396.3" y="403" width="1.2" height="48" fill="#00ffff"/>
<rect x="399.7" y="403" width="1.2" height="48" fill="#00ffff"/>
<rect x="403.3" y="403" width="1.2" height="48" fill="#00ffff"/>
<rect x="406.5" y="403" width="1.2" height="48" fill="#00ffff"/>
<rect x="409.6" y="403" width="1.2" height="48" fill="#00ffff"/>
<rect x="413" y="403" width="1.2" height="48" fill="#00ffff"/>
<rect x="416.3" y="403" width="1.2" height="48" fill="#00ffff"/>
<rect x="419.5" y="403" width="1.2" height="48" fill="#00ffff"/>
<rect x="423" y="403" width="1.2" height="48" fill="#00ffff"/>
<rect x="394" y="441" width="29" height="1" fill="#00ffff"/>
<rect x="394" y="450.5" width="30" height="1" fill="#00ffff"/>
<rect x="394" y="455.5" width="33" height="1" fill="#00ffff"/>
<rect x="394" y="425.5" width="3" height="2" fill="#00ffff"/>
<rect x="426" y="411.8" width="4.5" height="7" fill="#ff00ff"/>
<rect x="422" y="413.6" width="12" height="2.6" fill="#ff00ff"/>
<rect x="420" y="448" width="3.5" height="10.7" fill="#ff00ff"/>
<rect x="417.3" y="451.5" width="7.7" height="3.4" fill="#ff00ff"/>
<rect x="394" y="463" width="3" height="0.9" fill="#ff0000"/>
<rect x="394" y="465.2" width="2.0999999999999996" height="0.9" fill="#ff0000"/>
<rect x="394" y="463" width="0.9" height="3" fill="#ff0000"/>
<rect x="398" y="463" width="2" height="0.9" fill="#ff0000"/>
<rect x="398" y="465.2" width="1.4" height="0.9" fill="#ff0000"/>
<rect x="398" y="463" width="0.9" height="3" fill="#ff0000"/>
<rect x="401" y="463" width="3" height="0.9" fill="#ff0000"/>
<rect x="401" y="465.2" width="2.0999999999999996" height="0.9" fill="#ff0000"/>
<rect x="401" y="463" width="0.9" height="3" fill="#ff0000"/>
<rect x="405" y="463" width="2" height="0.9" fill="#ff0000"/>
<rect x="405" y="465.2" width="1.4" height="0.9" fill="#ff0000"/>
<rect x="405" y="463" width="0.9" height="3" fill="#ff0000"/>
<rect x="408" y="463" width="1.5" height="0.9" fill="#ff0000"/>
<rect x="408" y="465.2" width="1.0499999999999998" height="0.9" fill="#ff0000"/>
<rect x="408" y="463" width="0.9" height="3" fill="#ff0000"/>
<rect x="410" y="463" width="3.5" height="1" fill="#ff0000"/>
<rect x="410" y="465.2" width="3.5" height="1" fill="#ff0000"/>
<rect x="410" y="463" width="1" height="3.1999999999999886" fill="#ff0000"/>
<rect x="412.5" y="463" width="1" height="3.1999999999999886" fill="#ff0000"/>
</svg>

<div class="red" style="left:20px;top:386px;width:91px;height:36.5px;border-width:4.5px;"></div>
<div class="red" style="left:187px;top:640px;width:91px;height:47px;"></div>
<div class="red" style="left:492.5px;top:61px;width:39.5px;height:36.5px;border-width:4.5px;"></div>
</body>
</html>
